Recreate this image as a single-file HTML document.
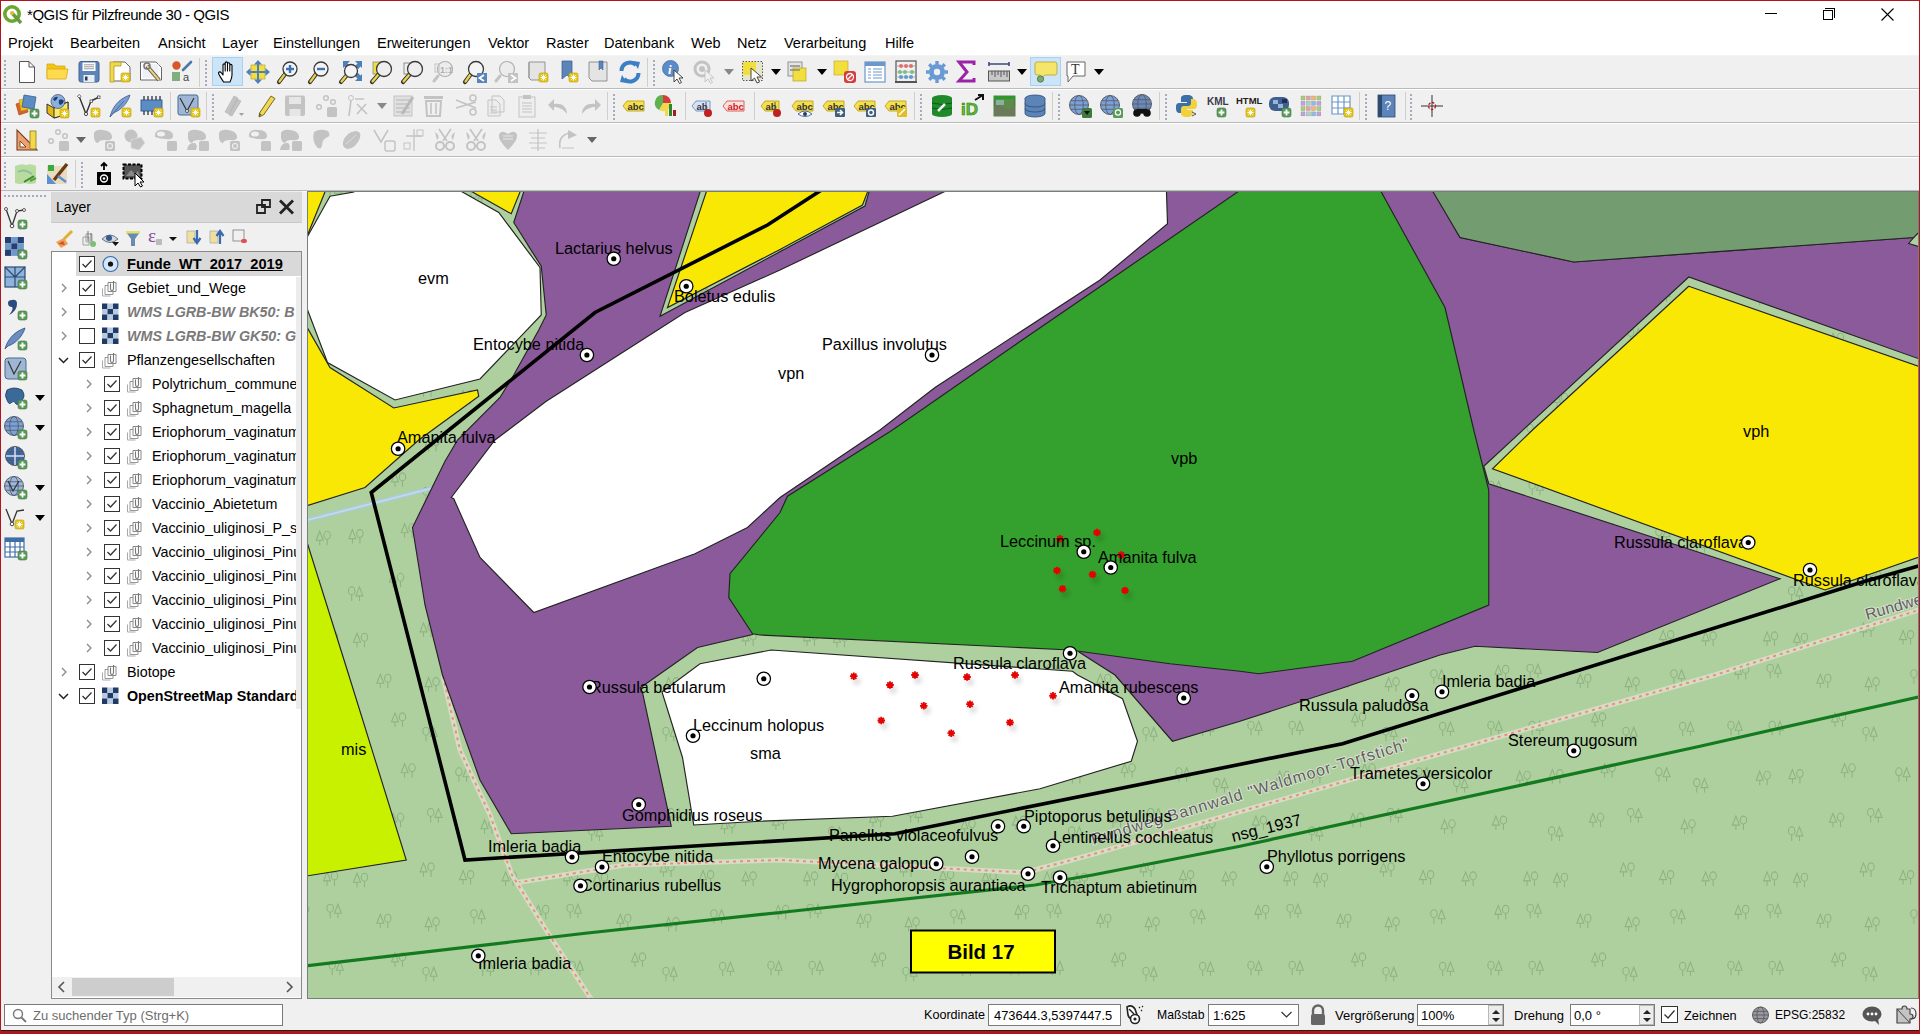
<!DOCTYPE html><html><head><meta charset="utf-8"><style>
*{margin:0;padding:0;box-sizing:border-box}
html,body{width:1920px;height:1034px;overflow:hidden;background:#f0f0f0;font-family:"Liberation Sans",sans-serif;position:relative}
.a{position:absolute}
.t{position:absolute;white-space:nowrap;color:#000}
</style></head><body>
<div class="a" style="left:0px;top:0px;width:1920px;height:56px;background:#ffffff"></div>
<svg class="a" style="left:2px;top:4px" width="22" height="22"><circle cx="10" cy="10" r="7.2" fill="none" stroke="#6aa832" stroke-width="3.6"/><path d="M10 9L19 19" stroke="#6a9a40" stroke-width="3.4"/><circle cx="10" cy="9" r="2" fill="#e8b830"/></svg>
<div class="t" style="left:27px;top:6px;font-size:15px;line-height:17px;letter-spacing:-0.45px">*QGIS für Pilzfreunde 30 - QGIS</div>
<div class="t" style="left:8px;top:35px;font-size:14.5px;line-height:17px;">Projekt</div>
<div class="t" style="left:70px;top:35px;font-size:14.5px;line-height:17px;">Bearbeiten</div>
<div class="t" style="left:158px;top:35px;font-size:14.5px;line-height:17px;">Ansicht</div>
<div class="t" style="left:222px;top:35px;font-size:14.5px;line-height:17px;">Layer</div>
<div class="t" style="left:273px;top:35px;font-size:14.5px;line-height:17px;">Einstellungen</div>
<div class="t" style="left:377px;top:35px;font-size:14.5px;line-height:17px;">Erweiterungen</div>
<div class="t" style="left:488px;top:35px;font-size:14.5px;line-height:17px;">Vektor</div>
<div class="t" style="left:546px;top:35px;font-size:14.5px;line-height:17px;">Raster</div>
<div class="t" style="left:604px;top:35px;font-size:14.5px;line-height:17px;">Datenbank</div>
<div class="t" style="left:691px;top:35px;font-size:14.5px;line-height:17px;">Web</div>
<div class="t" style="left:737px;top:35px;font-size:14.5px;line-height:17px;">Netz</div>
<div class="t" style="left:784px;top:35px;font-size:14.5px;line-height:17px;">Verarbeitung</div>
<div class="t" style="left:885px;top:35px;font-size:14.5px;line-height:17px;">Hilfe</div>
<div class="a" style="left:1765px;top:13px;width:12px;height:1px;background:#000"></div>
<div class="a" style="left:1823px;top:10px;width:10px;height:10px;border:1px solid #000"></div>
<div class="a" style="left:1825px;top:8px;width:10px;height:10px;border-top:1px solid #000;border-right:1px solid #000"></div>
<svg class="a" style="left:1881px;top:8px" width="13" height="13"><path d="M0.5 0.5 L12.5 12.5 M12.5 0.5 L0.5 12.5" stroke="#000" stroke-width="1.1"/></svg>
<div class="a" style="left:0px;top:56px;width:1920px;height:135px;background:#f0f0f0"></div>
<div class="a" style="left:0px;top:88px;width:1920px;height:1px;background:#bababa"></div>
<div class="a" style="left:0px;top:89px;width:1920px;height:1px;background:#ffffff"></div>
<div class="a" style="left:0px;top:122px;width:1920px;height:1px;background:#bababa"></div>
<div class="a" style="left:0px;top:123px;width:1920px;height:1px;background:#ffffff"></div>
<div class="a" style="left:0px;top:156px;width:1920px;height:1px;background:#bababa"></div>
<div class="a" style="left:0px;top:157px;width:1920px;height:1px;background:#ffffff"></div>
<div class="a" style="left:0px;top:190px;width:1920px;height:1px;background:#bababa"></div>
<div class="a" style="left:0px;top:191px;width:1920px;height:1px;background:#ffffff"></div>
<div class="a" style="left:0px;top:55px;width:1920px;height:1px;background:#f4f4f4"></div>
<div class="a" style="left:212px;top:57px;width:31px;height:29px;background:#cce4f7;border:1px solid #a8d0f0"></div>
<div class="a" style="left:1030px;top:57px;width:31px;height:29px;background:#cce4f7;border:1px solid #a8d0f0"></div>
<div class="a" style="left:0px;top:191px;width:50px;height:807px;background:#f0f0f0"></div>
<div class="a" style="left:50px;top:191px;width:253px;height:807px;background:#f0f0f0"></div>
<div class="a" style="left:51px;top:192px;width:251px;height:31px;background:#d9d9d9;border-bottom:1px solid #c8c8c8"></div>
<div class="t" style="left:56px;top:199px;font-size:14px;line-height:16px;">Layer</div>
<div class="a" style="left:51px;top:251px;width:251px;height:748px;background:#fff;border:1px solid #8a8a8a"></div>
<div class="a" style="left:76px;top:252px;width:225px;height:24px;background:#d9d9d9"></div>
<div class="a" style="left:296px;top:277px;width:5px;height:432px;background:#ececec"></div>
<div class="a" style="left:51px;top:252px;width:245px;height:720px;overflow:hidden"><div class="t" style="left:76px;top:4px;line-height:17px;font-weight:bold;text-decoration:underline;font-size:14.6px">Funde_WT_2017_2019</div><div class="t" style="left:76px;top:28px;line-height:17px;font-size:14.3px">Gebiet_und_Wege</div><div class="t" style="left:76px;top:52px;line-height:17px;font-weight:bold;font-style:italic;color:#7a7a7a;font-size:14.3px">WMS LGRB-BW BK50: B</div><div class="t" style="left:76px;top:76px;line-height:17px;font-weight:bold;font-style:italic;color:#7a7a7a;font-size:14.3px">WMS LGRB-BW GK50: G</div><div class="t" style="left:76px;top:100px;line-height:17px;font-size:14.4px">Pflanzengesellschaften</div><div class="t" style="left:101px;top:124px;line-height:17px;font-size:14.3px">Polytrichum_commune</div><div class="t" style="left:101px;top:148px;line-height:17px;font-size:14.3px">Sphagnetum_magella</div><div class="t" style="left:101px;top:172px;line-height:17px;font-size:14.3px">Eriophorum_vaginatum</div><div class="t" style="left:101px;top:196px;line-height:17px;font-size:14.3px">Eriophorum_vaginatum</div><div class="t" style="left:101px;top:220px;line-height:17px;font-size:14.3px">Eriophorum_vaginatum</div><div class="t" style="left:101px;top:244px;line-height:17px;font-size:14.3px">Vaccinio_Abietetum</div><div class="t" style="left:101px;top:268px;line-height:17px;font-size:14.3px">Vaccinio_uliginosi_P_sy</div><div class="t" style="left:101px;top:292px;line-height:17px;font-size:14.3px">Vaccinio_uliginosi_Pinus</div><div class="t" style="left:101px;top:316px;line-height:17px;font-size:14.3px">Vaccinio_uliginosi_Pinus</div><div class="t" style="left:101px;top:340px;line-height:17px;font-size:14.3px">Vaccinio_uliginosi_Pinus</div><div class="t" style="left:101px;top:364px;line-height:17px;font-size:14.3px">Vaccinio_uliginosi_Pinus</div><div class="t" style="left:101px;top:388px;line-height:17px;font-size:14.3px">Vaccinio_uliginosi_Pinus</div><div class="t" style="left:76px;top:412px;line-height:17px;font-size:14.3px">Biotope</div><div class="t" style="left:76px;top:436px;line-height:17px;font-weight:bold;font-size:14.3px">OpenStreetMap Standard</div></div>
<svg class="a" style="left:0;top:0" width="320" height="1034"><g transform="translate(79,256)"><rect x="0.5" y="0.5" width="15" height="15" fill="#fff" stroke="#333" stroke-width="1"/><path d="M3.5 8L6.5 11L12.5 4.5" fill="none" stroke="#333" stroke-width="1.3"/></g><g transform="translate(102,255.5)"><circle cx="8.5" cy="8.5" r="7.5" fill="#d4e6f8" stroke="#3a6ab0" stroke-width="1.2"/><circle cx="8.5" cy="8.5" r="2.6" fill="#111"/></g><g transform="translate(79,280)"><rect x="0.5" y="0.5" width="15" height="15" fill="#fff" stroke="#333" stroke-width="1"/><path d="M3.5 8L6.5 11L12.5 4.5" fill="none" stroke="#333" stroke-width="1.3"/></g><g transform="translate(102,279.5)"><path d="M0.5 16.5H8.5M0.5 16.5V9" stroke="#aaa" stroke-width="1" fill="none"/><path d="M3 6H11V15H3Z" fill="#fff" stroke="#999" stroke-width="1"/><path d="M6 3H14V12H6Z" fill="#fff" stroke="#888" stroke-width="1"/><path d="M8.5 4V9Q8.5 11 10 11Q11.5 11 11.5 9V1.5" fill="none" stroke="#777" stroke-width="1.1"/></g><g transform="translate(61,283)"><path d="M1 1L5 5L1 9" fill="none" stroke="#888" stroke-width="1.3"/></g><g transform="translate(79,304)"><rect x="0.5" y="0.5" width="15" height="15" fill="#fff" stroke="#333" stroke-width="1"/></g><g transform="translate(102,303.5)"><rect x="0.0" y="0.0" width="5.5" height="5.5" fill="#1f3a63"/><rect x="5.5" y="0.0" width="5.5" height="5.5" fill="#b9cbe3"/><rect x="11.0" y="0.0" width="5.5" height="5.5" fill="#1f3a63"/><rect x="0.0" y="5.5" width="5.5" height="5.5" fill="#b9cbe3"/><rect x="5.5" y="5.5" width="5.5" height="5.5" fill="#1f3a63"/><rect x="11.0" y="5.5" width="5.5" height="5.5" fill="#b9cbe3"/><rect x="0.0" y="11.0" width="5.5" height="5.5" fill="#1f3a63"/><rect x="5.5" y="11.0" width="5.5" height="5.5" fill="#b9cbe3"/><rect x="11.0" y="11.0" width="5.5" height="5.5" fill="#1f3a63"/></g><g transform="translate(61,307)"><path d="M1 1L5 5L1 9" fill="none" stroke="#888" stroke-width="1.3"/></g><g transform="translate(79,328)"><rect x="0.5" y="0.5" width="15" height="15" fill="#fff" stroke="#333" stroke-width="1"/></g><g transform="translate(102,327.5)"><rect x="0.0" y="0.0" width="5.5" height="5.5" fill="#1f3a63"/><rect x="5.5" y="0.0" width="5.5" height="5.5" fill="#b9cbe3"/><rect x="11.0" y="0.0" width="5.5" height="5.5" fill="#1f3a63"/><rect x="0.0" y="5.5" width="5.5" height="5.5" fill="#b9cbe3"/><rect x="5.5" y="5.5" width="5.5" height="5.5" fill="#1f3a63"/><rect x="11.0" y="5.5" width="5.5" height="5.5" fill="#b9cbe3"/><rect x="0.0" y="11.0" width="5.5" height="5.5" fill="#1f3a63"/><rect x="5.5" y="11.0" width="5.5" height="5.5" fill="#b9cbe3"/><rect x="11.0" y="11.0" width="5.5" height="5.5" fill="#1f3a63"/></g><g transform="translate(61,331)"><path d="M1 1L5 5L1 9" fill="none" stroke="#888" stroke-width="1.3"/></g><g transform="translate(79,352)"><rect x="0.5" y="0.5" width="15" height="15" fill="#fff" stroke="#333" stroke-width="1"/><path d="M3.5 8L6.5 11L12.5 4.5" fill="none" stroke="#333" stroke-width="1.3"/></g><g transform="translate(102,351.5)"><path d="M0.5 16.5H8.5M0.5 16.5V9" stroke="#aaa" stroke-width="1" fill="none"/><path d="M3 6H11V15H3Z" fill="#fff" stroke="#999" stroke-width="1"/><path d="M6 3H14V12H6Z" fill="#fff" stroke="#888" stroke-width="1"/><path d="M8.5 4V9Q8.5 11 10 11Q11.5 11 11.5 9V1.5" fill="none" stroke="#777" stroke-width="1.1"/></g><g transform="translate(58,357)"><path d="M1 1L5.5 5.5L10 1" fill="none" stroke="#222" stroke-width="1.5"/></g><g transform="translate(104,376)"><rect x="0.5" y="0.5" width="15" height="15" fill="#fff" stroke="#333" stroke-width="1"/><path d="M3.5 8L6.5 11L12.5 4.5" fill="none" stroke="#333" stroke-width="1.3"/></g><g transform="translate(127,375.5)"><path d="M0.5 16.5H8.5M0.5 16.5V9" stroke="#aaa" stroke-width="1" fill="none"/><path d="M3 6H11V15H3Z" fill="#fff" stroke="#999" stroke-width="1"/><path d="M6 3H14V12H6Z" fill="#fff" stroke="#888" stroke-width="1"/><path d="M8.5 4V9Q8.5 11 10 11Q11.5 11 11.5 9V1.5" fill="none" stroke="#777" stroke-width="1.1"/></g><g transform="translate(86,379)"><path d="M1 1L5 5L1 9" fill="none" stroke="#888" stroke-width="1.3"/></g><g transform="translate(104,400)"><rect x="0.5" y="0.5" width="15" height="15" fill="#fff" stroke="#333" stroke-width="1"/><path d="M3.5 8L6.5 11L12.5 4.5" fill="none" stroke="#333" stroke-width="1.3"/></g><g transform="translate(127,399.5)"><path d="M0.5 16.5H8.5M0.5 16.5V9" stroke="#aaa" stroke-width="1" fill="none"/><path d="M3 6H11V15H3Z" fill="#fff" stroke="#999" stroke-width="1"/><path d="M6 3H14V12H6Z" fill="#fff" stroke="#888" stroke-width="1"/><path d="M8.5 4V9Q8.5 11 10 11Q11.5 11 11.5 9V1.5" fill="none" stroke="#777" stroke-width="1.1"/></g><g transform="translate(86,403)"><path d="M1 1L5 5L1 9" fill="none" stroke="#888" stroke-width="1.3"/></g><g transform="translate(104,424)"><rect x="0.5" y="0.5" width="15" height="15" fill="#fff" stroke="#333" stroke-width="1"/><path d="M3.5 8L6.5 11L12.5 4.5" fill="none" stroke="#333" stroke-width="1.3"/></g><g transform="translate(127,423.5)"><path d="M0.5 16.5H8.5M0.5 16.5V9" stroke="#aaa" stroke-width="1" fill="none"/><path d="M3 6H11V15H3Z" fill="#fff" stroke="#999" stroke-width="1"/><path d="M6 3H14V12H6Z" fill="#fff" stroke="#888" stroke-width="1"/><path d="M8.5 4V9Q8.5 11 10 11Q11.5 11 11.5 9V1.5" fill="none" stroke="#777" stroke-width="1.1"/></g><g transform="translate(86,427)"><path d="M1 1L5 5L1 9" fill="none" stroke="#888" stroke-width="1.3"/></g><g transform="translate(104,448)"><rect x="0.5" y="0.5" width="15" height="15" fill="#fff" stroke="#333" stroke-width="1"/><path d="M3.5 8L6.5 11L12.5 4.5" fill="none" stroke="#333" stroke-width="1.3"/></g><g transform="translate(127,447.5)"><path d="M0.5 16.5H8.5M0.5 16.5V9" stroke="#aaa" stroke-width="1" fill="none"/><path d="M3 6H11V15H3Z" fill="#fff" stroke="#999" stroke-width="1"/><path d="M6 3H14V12H6Z" fill="#fff" stroke="#888" stroke-width="1"/><path d="M8.5 4V9Q8.5 11 10 11Q11.5 11 11.5 9V1.5" fill="none" stroke="#777" stroke-width="1.1"/></g><g transform="translate(86,451)"><path d="M1 1L5 5L1 9" fill="none" stroke="#888" stroke-width="1.3"/></g><g transform="translate(104,472)"><rect x="0.5" y="0.5" width="15" height="15" fill="#fff" stroke="#333" stroke-width="1"/><path d="M3.5 8L6.5 11L12.5 4.5" fill="none" stroke="#333" stroke-width="1.3"/></g><g transform="translate(127,471.5)"><path d="M0.5 16.5H8.5M0.5 16.5V9" stroke="#aaa" stroke-width="1" fill="none"/><path d="M3 6H11V15H3Z" fill="#fff" stroke="#999" stroke-width="1"/><path d="M6 3H14V12H6Z" fill="#fff" stroke="#888" stroke-width="1"/><path d="M8.5 4V9Q8.5 11 10 11Q11.5 11 11.5 9V1.5" fill="none" stroke="#777" stroke-width="1.1"/></g><g transform="translate(86,475)"><path d="M1 1L5 5L1 9" fill="none" stroke="#888" stroke-width="1.3"/></g><g transform="translate(104,496)"><rect x="0.5" y="0.5" width="15" height="15" fill="#fff" stroke="#333" stroke-width="1"/><path d="M3.5 8L6.5 11L12.5 4.5" fill="none" stroke="#333" stroke-width="1.3"/></g><g transform="translate(127,495.5)"><path d="M0.5 16.5H8.5M0.5 16.5V9" stroke="#aaa" stroke-width="1" fill="none"/><path d="M3 6H11V15H3Z" fill="#fff" stroke="#999" stroke-width="1"/><path d="M6 3H14V12H6Z" fill="#fff" stroke="#888" stroke-width="1"/><path d="M8.5 4V9Q8.5 11 10 11Q11.5 11 11.5 9V1.5" fill="none" stroke="#777" stroke-width="1.1"/></g><g transform="translate(86,499)"><path d="M1 1L5 5L1 9" fill="none" stroke="#888" stroke-width="1.3"/></g><g transform="translate(104,520)"><rect x="0.5" y="0.5" width="15" height="15" fill="#fff" stroke="#333" stroke-width="1"/><path d="M3.5 8L6.5 11L12.5 4.5" fill="none" stroke="#333" stroke-width="1.3"/></g><g transform="translate(127,519.5)"><path d="M0.5 16.5H8.5M0.5 16.5V9" stroke="#aaa" stroke-width="1" fill="none"/><path d="M3 6H11V15H3Z" fill="#fff" stroke="#999" stroke-width="1"/><path d="M6 3H14V12H6Z" fill="#fff" stroke="#888" stroke-width="1"/><path d="M8.5 4V9Q8.5 11 10 11Q11.5 11 11.5 9V1.5" fill="none" stroke="#777" stroke-width="1.1"/></g><g transform="translate(86,523)"><path d="M1 1L5 5L1 9" fill="none" stroke="#888" stroke-width="1.3"/></g><g transform="translate(104,544)"><rect x="0.5" y="0.5" width="15" height="15" fill="#fff" stroke="#333" stroke-width="1"/><path d="M3.5 8L6.5 11L12.5 4.5" fill="none" stroke="#333" stroke-width="1.3"/></g><g transform="translate(127,543.5)"><path d="M0.5 16.5H8.5M0.5 16.5V9" stroke="#aaa" stroke-width="1" fill="none"/><path d="M3 6H11V15H3Z" fill="#fff" stroke="#999" stroke-width="1"/><path d="M6 3H14V12H6Z" fill="#fff" stroke="#888" stroke-width="1"/><path d="M8.5 4V9Q8.5 11 10 11Q11.5 11 11.5 9V1.5" fill="none" stroke="#777" stroke-width="1.1"/></g><g transform="translate(86,547)"><path d="M1 1L5 5L1 9" fill="none" stroke="#888" stroke-width="1.3"/></g><g transform="translate(104,568)"><rect x="0.5" y="0.5" width="15" height="15" fill="#fff" stroke="#333" stroke-width="1"/><path d="M3.5 8L6.5 11L12.5 4.5" fill="none" stroke="#333" stroke-width="1.3"/></g><g transform="translate(127,567.5)"><path d="M0.5 16.5H8.5M0.5 16.5V9" stroke="#aaa" stroke-width="1" fill="none"/><path d="M3 6H11V15H3Z" fill="#fff" stroke="#999" stroke-width="1"/><path d="M6 3H14V12H6Z" fill="#fff" stroke="#888" stroke-width="1"/><path d="M8.5 4V9Q8.5 11 10 11Q11.5 11 11.5 9V1.5" fill="none" stroke="#777" stroke-width="1.1"/></g><g transform="translate(86,571)"><path d="M1 1L5 5L1 9" fill="none" stroke="#888" stroke-width="1.3"/></g><g transform="translate(104,592)"><rect x="0.5" y="0.5" width="15" height="15" fill="#fff" stroke="#333" stroke-width="1"/><path d="M3.5 8L6.5 11L12.5 4.5" fill="none" stroke="#333" stroke-width="1.3"/></g><g transform="translate(127,591.5)"><path d="M0.5 16.5H8.5M0.5 16.5V9" stroke="#aaa" stroke-width="1" fill="none"/><path d="M3 6H11V15H3Z" fill="#fff" stroke="#999" stroke-width="1"/><path d="M6 3H14V12H6Z" fill="#fff" stroke="#888" stroke-width="1"/><path d="M8.5 4V9Q8.5 11 10 11Q11.5 11 11.5 9V1.5" fill="none" stroke="#777" stroke-width="1.1"/></g><g transform="translate(86,595)"><path d="M1 1L5 5L1 9" fill="none" stroke="#888" stroke-width="1.3"/></g><g transform="translate(104,616)"><rect x="0.5" y="0.5" width="15" height="15" fill="#fff" stroke="#333" stroke-width="1"/><path d="M3.5 8L6.5 11L12.5 4.5" fill="none" stroke="#333" stroke-width="1.3"/></g><g transform="translate(127,615.5)"><path d="M0.5 16.5H8.5M0.5 16.5V9" stroke="#aaa" stroke-width="1" fill="none"/><path d="M3 6H11V15H3Z" fill="#fff" stroke="#999" stroke-width="1"/><path d="M6 3H14V12H6Z" fill="#fff" stroke="#888" stroke-width="1"/><path d="M8.5 4V9Q8.5 11 10 11Q11.5 11 11.5 9V1.5" fill="none" stroke="#777" stroke-width="1.1"/></g><g transform="translate(86,619)"><path d="M1 1L5 5L1 9" fill="none" stroke="#888" stroke-width="1.3"/></g><g transform="translate(104,640)"><rect x="0.5" y="0.5" width="15" height="15" fill="#fff" stroke="#333" stroke-width="1"/><path d="M3.5 8L6.5 11L12.5 4.5" fill="none" stroke="#333" stroke-width="1.3"/></g><g transform="translate(127,639.5)"><path d="M0.5 16.5H8.5M0.5 16.5V9" stroke="#aaa" stroke-width="1" fill="none"/><path d="M3 6H11V15H3Z" fill="#fff" stroke="#999" stroke-width="1"/><path d="M6 3H14V12H6Z" fill="#fff" stroke="#888" stroke-width="1"/><path d="M8.5 4V9Q8.5 11 10 11Q11.5 11 11.5 9V1.5" fill="none" stroke="#777" stroke-width="1.1"/></g><g transform="translate(86,643)"><path d="M1 1L5 5L1 9" fill="none" stroke="#888" stroke-width="1.3"/></g><g transform="translate(79,664)"><rect x="0.5" y="0.5" width="15" height="15" fill="#fff" stroke="#333" stroke-width="1"/><path d="M3.5 8L6.5 11L12.5 4.5" fill="none" stroke="#333" stroke-width="1.3"/></g><g transform="translate(102,663.5)"><path d="M0.5 16.5H8.5M0.5 16.5V9" stroke="#aaa" stroke-width="1" fill="none"/><path d="M3 6H11V15H3Z" fill="#fff" stroke="#999" stroke-width="1"/><path d="M6 3H14V12H6Z" fill="#fff" stroke="#888" stroke-width="1"/><path d="M8.5 4V9Q8.5 11 10 11Q11.5 11 11.5 9V1.5" fill="none" stroke="#777" stroke-width="1.1"/></g><g transform="translate(61,667)"><path d="M1 1L5 5L1 9" fill="none" stroke="#888" stroke-width="1.3"/></g><g transform="translate(79,688)"><rect x="0.5" y="0.5" width="15" height="15" fill="#fff" stroke="#333" stroke-width="1"/><path d="M3.5 8L6.5 11L12.5 4.5" fill="none" stroke="#333" stroke-width="1.3"/></g><g transform="translate(102,687.5)"><rect x="0.0" y="0.0" width="5.5" height="5.5" fill="#1f3a63"/><rect x="5.5" y="0.0" width="5.5" height="5.5" fill="#b9cbe3"/><rect x="11.0" y="0.0" width="5.5" height="5.5" fill="#1f3a63"/><rect x="0.0" y="5.5" width="5.5" height="5.5" fill="#b9cbe3"/><rect x="5.5" y="5.5" width="5.5" height="5.5" fill="#1f3a63"/><rect x="11.0" y="5.5" width="5.5" height="5.5" fill="#b9cbe3"/><rect x="0.0" y="11.0" width="5.5" height="5.5" fill="#1f3a63"/><rect x="5.5" y="11.0" width="5.5" height="5.5" fill="#b9cbe3"/><rect x="11.0" y="11.0" width="5.5" height="5.5" fill="#1f3a63"/></g><g transform="translate(58,693)"><path d="M1 1L5.5 5.5L10 1" fill="none" stroke="#222" stroke-width="1.5"/></g></svg>
<svg class="a" style="left:254px;top:198px" width="46" height="20"><path d="M8 2H16V9H8Z M3 7H11V15H3Z" fill="#d9d9d9" stroke="#222" stroke-width="1.8"/><path d="M26 2.5L39 15.5M39 2.5L26 15.5" stroke="#222" stroke-width="2.8"/></svg>
<div class="a" style="left:52px;top:977px;width:249px;height:20px;background:#f0f0f0"></div>
<div class="a" style="left:72px;top:978px;width:102px;height:18px;background:#cdcdcd"></div>
<svg class="a" style="left:55px;top:980px" width="250" height="14"><path d="M9 2L4 7L9 12" fill="none" stroke="#555" stroke-width="1.6"/><path d="M232 2L237 7L232 12" fill="none" stroke="#555" stroke-width="1.6"/></svg>
<div class="a" style="left:307px;top:191px;width:1612px;height:808px;background:#aed09e;border:1px solid #76807a"></div>
<svg style="position:absolute;left:308px;top:192px" width="1610" height="806" viewBox="308 192 1610 806">
<defs><pattern id="trees" patternUnits="userSpaceOnUse" width="240" height="240" x="0" y="0"><g transform="translate(238.9,1.2)" fill="none" stroke="#8db381" stroke-width="1.1"><ellipse cx="3.8" cy="5" rx="3.2" ry="4"/><line x1="3.8" y1="9" x2="3.8" y2="15"/><path d="M11.5 1 L15 10 L8 10 Z"/><line x1="11.5" y1="10" x2="11.5" y2="15"/></g><g transform="translate(-1.1,1.2)" fill="none" stroke="#8db381" stroke-width="1.1"><ellipse cx="3.8" cy="5" rx="3.2" ry="4"/><line x1="3.8" y1="9" x2="3.8" y2="15"/><path d="M11.5 1 L15 10 L8 10 Z"/><line x1="11.5" y1="10" x2="11.5" y2="15"/></g><g transform="translate(47.2,0.2)" fill="none" stroke="#8db381" stroke-width="1.1"><ellipse cx="3.8" cy="5" rx="3.2" ry="4"/><line x1="3.8" y1="9" x2="3.8" y2="15"/><path d="M11.5 1 L15 10 L8 10 Z"/><line x1="11.5" y1="10" x2="11.5" y2="15"/></g><g transform="translate(88.4,0.2)" fill="none" stroke="#8db381" stroke-width="1.1"><ellipse cx="3.8" cy="5" rx="3.2" ry="4"/><line x1="3.8" y1="9" x2="3.8" y2="15"/><path d="M11.5 1 L15 10 L8 10 Z"/><line x1="11.5" y1="10" x2="11.5" y2="15"/></g><g transform="translate(151.0,231.9)" fill="none" stroke="#8db381" stroke-width="1.1"><path d="M4 1 L7.5 10 L0.5 10 Z"/><line x1="4" y1="10" x2="4" y2="15"/><ellipse cx="11.5" cy="5" rx="3.2" ry="4"/><line x1="11.5" y1="9" x2="11.5" y2="15"/></g><g transform="translate(151.0,-8.1)" fill="none" stroke="#8db381" stroke-width="1.1"><path d="M4 1 L7.5 10 L0.5 10 Z"/><line x1="4" y1="10" x2="4" y2="15"/><ellipse cx="11.5" cy="5" rx="3.2" ry="4"/><line x1="11.5" y1="9" x2="11.5" y2="15"/></g><g transform="translate(182.2,6.2)" fill="none" stroke="#8db381" stroke-width="1.1"><ellipse cx="3.8" cy="5" rx="3.2" ry="4"/><line x1="3.8" y1="9" x2="3.8" y2="15"/><path d="M11.5 1 L15 10 L8 10 Z"/><line x1="11.5" y1="10" x2="11.5" y2="15"/></g><g transform="translate(13.0,57.6)" fill="none" stroke="#8db381" stroke-width="1.1"><ellipse cx="3.8" cy="5" rx="3.2" ry="4"/><line x1="3.8" y1="9" x2="3.8" y2="15"/><path d="M11.5 1 L15 10 L8 10 Z"/><line x1="11.5" y1="10" x2="11.5" y2="15"/></g><g transform="translate(75.7,50.3)" fill="none" stroke="#8db381" stroke-width="1.1"><path d="M4 1 L7.5 10 L0.5 10 Z"/><line x1="4" y1="10" x2="4" y2="15"/><ellipse cx="11.5" cy="5" rx="3.2" ry="4"/><line x1="11.5" y1="9" x2="11.5" y2="15"/></g><g transform="translate(108.4,48.6)" fill="none" stroke="#8db381" stroke-width="1.1"><path d="M4 1 L7.5 10 L0.5 10 Z"/><line x1="4" y1="10" x2="4" y2="15"/><ellipse cx="11.5" cy="5" rx="3.2" ry="4"/><line x1="11.5" y1="9" x2="11.5" y2="15"/></g><g transform="translate(160.6,42.8)" fill="none" stroke="#8db381" stroke-width="1.1"><path d="M4 1 L7.5 10 L0.5 10 Z"/><line x1="4" y1="10" x2="4" y2="15"/><ellipse cx="11.5" cy="5" rx="3.2" ry="4"/><line x1="11.5" y1="9" x2="11.5" y2="15"/></g><g transform="translate(215.1,46.8)" fill="none" stroke="#8db381" stroke-width="1.1"><ellipse cx="3.8" cy="5" rx="3.2" ry="4"/><line x1="3.8" y1="9" x2="3.8" y2="15"/><path d="M11.5 1 L15 10 L8 10 Z"/><line x1="11.5" y1="10" x2="11.5" y2="15"/></g><g transform="translate(0.5,98.8)" fill="none" stroke="#8db381" stroke-width="1.1"><path d="M4 1 L7.5 10 L0.5 10 Z"/><line x1="4" y1="10" x2="4" y2="15"/><ellipse cx="11.5" cy="5" rx="3.2" ry="4"/><line x1="11.5" y1="9" x2="11.5" y2="15"/></g><g transform="translate(51.9,95.1)" fill="none" stroke="#8db381" stroke-width="1.1"><path d="M4 1 L7.5 10 L0.5 10 Z"/><line x1="4" y1="10" x2="4" y2="15"/><ellipse cx="11.5" cy="5" rx="3.2" ry="4"/><line x1="11.5" y1="9" x2="11.5" y2="15"/></g><g transform="translate(107.9,105.9)" fill="none" stroke="#8db381" stroke-width="1.1"><ellipse cx="3.8" cy="5" rx="3.2" ry="4"/><line x1="3.8" y1="9" x2="3.8" y2="15"/><path d="M11.5 1 L15 10 L8 10 Z"/><line x1="11.5" y1="10" x2="11.5" y2="15"/></g><g transform="translate(149.0,92.3)" fill="none" stroke="#8db381" stroke-width="1.1"><path d="M4 1 L7.5 10 L0.5 10 Z"/><line x1="4" y1="10" x2="4" y2="15"/><ellipse cx="11.5" cy="5" rx="3.2" ry="4"/><line x1="11.5" y1="9" x2="11.5" y2="15"/></g><g transform="translate(186.9,87.4)" fill="none" stroke="#8db381" stroke-width="1.1"><ellipse cx="3.8" cy="5" rx="3.2" ry="4"/><line x1="3.8" y1="9" x2="3.8" y2="15"/><path d="M11.5 1 L15 10 L8 10 Z"/><line x1="11.5" y1="10" x2="11.5" y2="15"/></g><g transform="translate(21.6,150.9)" fill="none" stroke="#8db381" stroke-width="1.1"><path d="M4 1 L7.5 10 L0.5 10 Z"/><line x1="4" y1="10" x2="4" y2="15"/><ellipse cx="11.5" cy="5" rx="3.2" ry="4"/><line x1="11.5" y1="9" x2="11.5" y2="15"/></g><g transform="translate(83.0,150.9)" fill="none" stroke="#8db381" stroke-width="1.1"><path d="M4 1 L7.5 10 L0.5 10 Z"/><line x1="4" y1="10" x2="4" y2="15"/><ellipse cx="11.5" cy="5" rx="3.2" ry="4"/><line x1="11.5" y1="9" x2="11.5" y2="15"/></g><g transform="translate(113.0,152.2)" fill="none" stroke="#8db381" stroke-width="1.1"><path d="M4 1 L7.5 10 L0.5 10 Z"/><line x1="4" y1="10" x2="4" y2="15"/><ellipse cx="11.5" cy="5" rx="3.2" ry="4"/><line x1="11.5" y1="9" x2="11.5" y2="15"/></g><g transform="translate(179.5,141.9)" fill="none" stroke="#8db381" stroke-width="1.1"><path d="M4 1 L7.5 10 L0.5 10 Z"/><line x1="4" y1="10" x2="4" y2="15"/><ellipse cx="11.5" cy="5" rx="3.2" ry="4"/><line x1="11.5" y1="9" x2="11.5" y2="15"/></g><g transform="translate(219.1,149.6)" fill="none" stroke="#8db381" stroke-width="1.1"><path d="M4 1 L7.5 10 L0.5 10 Z"/><line x1="4" y1="10" x2="4" y2="15"/><ellipse cx="11.5" cy="5" rx="3.2" ry="4"/><line x1="11.5" y1="9" x2="11.5" y2="15"/></g><g transform="translate(230.1,188.7)" fill="none" stroke="#8db381" stroke-width="1.1"><ellipse cx="3.8" cy="5" rx="3.2" ry="4"/><line x1="3.8" y1="9" x2="3.8" y2="15"/><path d="M11.5 1 L15 10 L8 10 Z"/><line x1="11.5" y1="10" x2="11.5" y2="15"/></g><g transform="translate(-9.9,188.7)" fill="none" stroke="#8db381" stroke-width="1.1"><ellipse cx="3.8" cy="5" rx="3.2" ry="4"/><line x1="3.8" y1="9" x2="3.8" y2="15"/><path d="M11.5 1 L15 10 L8 10 Z"/><line x1="11.5" y1="10" x2="11.5" y2="15"/></g><g transform="translate(54.2,184.4)" fill="none" stroke="#8db381" stroke-width="1.1"><path d="M4 1 L7.5 10 L0.5 10 Z"/><line x1="4" y1="10" x2="4" y2="15"/><ellipse cx="11.5" cy="5" rx="3.2" ry="4"/><line x1="11.5" y1="9" x2="11.5" y2="15"/></g><g transform="translate(86.4,183.2)" fill="none" stroke="#8db381" stroke-width="1.1"><ellipse cx="3.8" cy="5" rx="3.2" ry="4"/><line x1="3.8" y1="9" x2="3.8" y2="15"/><path d="M11.5 1 L15 10 L8 10 Z"/><line x1="11.5" y1="10" x2="11.5" y2="15"/></g><g transform="translate(136.3,193.2)" fill="none" stroke="#8db381" stroke-width="1.1"><path d="M4 1 L7.5 10 L0.5 10 Z"/><line x1="4" y1="10" x2="4" y2="15"/><ellipse cx="11.5" cy="5" rx="3.2" ry="4"/><line x1="11.5" y1="9" x2="11.5" y2="15"/></g><g transform="translate(184.6,196.6)" fill="none" stroke="#8db381" stroke-width="1.1"><path d="M4 1 L7.5 10 L0.5 10 Z"/><line x1="4" y1="10" x2="4" y2="15"/><ellipse cx="11.5" cy="5" rx="3.2" ry="4"/><line x1="11.5" y1="9" x2="11.5" y2="15"/></g></pattern><filter id="sh" x="-50%" y="-50%" width="200%" height="200%"><feGaussianBlur stdDeviation="2"/></filter></defs>
<rect x="308" y="192" width="1610" height="806" fill="#aed09e"/>
<rect x="308" y="192" width="1610" height="806" fill="url(#trees)"/>
<polyline points="300.00,522.00 430.00,488.75 460.00,481.00" fill="none" stroke="#aacbdf" stroke-width="4.2"/>
<polyline points="300.00,522.00 430.00,488.75 460.00,481.00" fill="none" stroke="#c4dcea" stroke-width="1.6"/>
<polyline points="517.50,882.50 625.00,865.00 780.00,860.00 1025.00,872.50 1090.00,855.00 1220.00,817.50 1440.00,753.75 1715.00,675.00 1925.00,608.00" fill="none" stroke="#d7dcc4" stroke-width="5" stroke-linejoin="round"/>
<polyline points="517.50,882.50 625.00,865.00 780.00,860.00 1025.00,872.50 1090.00,855.00 1220.00,817.50 1440.00,753.75 1715.00,675.00 1925.00,608.00" fill="none" stroke="#e98f80" stroke-width="2" stroke-dasharray="3,4"/>
<polyline points="443.00,676.00 460.00,750.00 490.00,815.00 512.00,875.00 548.00,933.00 595.00,1005.00" fill="none" stroke="#d7dcc4" stroke-width="5" stroke-linejoin="round"/>
<polyline points="443.00,676.00 460.00,750.00 490.00,815.00 512.00,875.00 548.00,933.00 595.00,1005.00" fill="none" stroke="#e98f80" stroke-width="2" stroke-dasharray="3,4"/>
<text transform="translate(474,748) rotate(63.4)" font-family="Liberation Sans" font-size="14" fill="#6e6e6e" stroke="#f2f2f2" stroke-width="2" paint-order="stroke">Torfstichweg&quot;</text>
<polygon points="300.00,520.00 307.50,543.75 348.75,675.00 406.25,860.00 300.00,877.00" fill="#c8f100" stroke="#232323" stroke-width="1.15" stroke-linejoin="miter" />
<polygon points="300.00,185.00 327.80,185.00 307.50,235.00 300.00,253.00" fill="#f9e804" stroke="#232323" stroke-width="1.15" stroke-linejoin="miter" />
<polygon points="300.00,315.00 330.00,367.50 393.75,408.00 477.50,390.00 478.75,396.25 418.75,440.00 365.00,487.50 300.00,508.00" fill="#f9e804" stroke="#232323" stroke-width="1.15" stroke-linejoin="miter" />
<polygon points="460.00,185.00 522.80,185.00 511.25,213.75" fill="#f9e804" stroke="#232323" stroke-width="1.15" stroke-linejoin="miter" />
<polygon points="526.00,185.00 702.30,185.00 660.00,316.25 865.00,206.00 871.00,185.00 1431.00,185.00 1460.00,237.50 1573.75,262.00 1913.75,237.50 1908.70,243.50 1925.00,248.50 1925.00,361.00 1688.75,277.00 1483.75,466.25 1488.75,483.75 1780.00,578.75 1597.50,652.50 1475.00,646.25 1440.00,655.00 1342.50,688.00 1240.00,721.25 1172.50,741.25 1115.00,675.00 1079.00,652.00 1070.00,640.00 760.00,600.00 752.50,634.50 697.50,647.50 640.00,688.00 642.50,692.50 671.25,826.25 511.25,833.75 480.00,780.00 442.50,675.00 425.00,605.00 412.50,527.50 445.00,461.25 457.50,440.00 500.00,397.50 513.75,375.00 538.75,330.00 546.25,315.00 541.25,266.25 513.75,222.50" fill="#8b5a9b" stroke="#232323" stroke-width="1.15" stroke-linejoin="miter" />
<polygon points="1429.00,185.00 1925.00,185.00 1925.00,226.00 1913.75,237.50 1573.75,262.00 1460.00,237.50" fill="#739d70" stroke="#232323" stroke-width="1.15" stroke-linejoin="miter" />
<polygon points="958.40,185.00 1166.25,185.00 1167.50,223.75 1100.00,280.00 935.00,387.50 880.00,430.00 780.00,497.50 747.50,527.50 695.00,553.75 533.75,612.50 480.00,557.50 453.75,498.75 451.25,497.50 495.00,440.00 546.25,401.25 685.00,312.50 780.00,270.00" fill="#ffffff" stroke="#232323" stroke-width="1.15" stroke-linejoin="miter" />
<polygon points="1247.70,185.00 1377.40,185.00 1445.00,307.50 1473.75,430.00 1488.75,490.00 1488.75,605.00 1352.50,661.25 1258.75,673.75 1240.00,671.25 1170.00,663.75 1070.00,650.00 760.00,635.00 752.50,633.75 728.75,597.50 730.00,573.75 780.00,512.50 787.50,496.25 892.50,430.00 1015.00,345.00 1102.50,285.00" fill="#34a02d" stroke="#232323" stroke-width="1.15" stroke-linejoin="miter" />
<polygon points="1688.75,286.25 1925.00,368.50 1925.00,555.00 1825.00,590.00 1492.50,468.75 1532.50,430.00" fill="#f9e804" stroke="#232323" stroke-width="1.15" stroke-linejoin="miter" />
<polygon points="708.60,185.00 870.20,185.00 862.50,205.00 780.00,249.50 667.50,307.50" fill="#f9e804" stroke="#232323" stroke-width="1.15" stroke-linejoin="miter" />
<polygon points="700.00,663.75 771.25,650.00 1072.50,671.25 1077.50,675.00 1122.50,698.75 1137.50,741.25 1131.25,761.25 1040.00,788.75 892.50,816.25 760.00,821.25 693.75,825.00 682.50,757.50 662.00,692.00" fill="#ffffff" stroke="#232323" stroke-width="1.15" stroke-linejoin="miter" />
<polygon points="330.00,196.25 353.75,192.00 353.75,185.00 450.00,185.00 498.75,212.50 540.00,267.50 541.25,315.00 480.00,379.00 395.00,400.00 327.50,362.50 300.00,290.00 300.00,250.00" fill="#ffffff" stroke="#232323" stroke-width="1.15" stroke-linejoin="miter" />
<polyline points="300.00,966.50 587.50,933.00 780.00,912.50 1035.00,885.00 1092.50,875.00 1240.00,846.25 1700.00,746.25 1925.00,695.50" fill="none" stroke="#137a1f" stroke-width="3.2" stroke-linejoin="round"/>
<polyline points="823.00,189.00 767.50,225.00 595.00,312.50 371.25,492.50 465.00,860.00 895.00,833.75 1342.50,743.75 1865.00,581.25 1925.00,564.00" fill="none" stroke="#000" stroke-width="3.6" stroke-linejoin="miter"/>
<circle cx="1063" cy="543.75" r="4" fill="#000" opacity="0.12" filter="url(#sh)"/>
<circle cx="1100" cy="537.5" r="4" fill="#000" opacity="0.12" filter="url(#sh)"/>
<circle cx="1124.25" cy="560" r="4" fill="#000" opacity="0.12" filter="url(#sh)"/>
<circle cx="1060" cy="575.5" r="4" fill="#000" opacity="0.12" filter="url(#sh)"/>
<circle cx="1095.5" cy="579.5" r="4" fill="#000" opacity="0.12" filter="url(#sh)"/>
<circle cx="1065.5" cy="593.75" r="4" fill="#000" opacity="0.12" filter="url(#sh)"/>
<circle cx="1128" cy="595.5" r="4" fill="#000" opacity="0.12" filter="url(#sh)"/>
<circle cx="856.75" cy="681.25" r="4" fill="#000" opacity="0.12" filter="url(#sh)"/>
<circle cx="893" cy="690" r="4" fill="#000" opacity="0.12" filter="url(#sh)"/>
<circle cx="918" cy="680" r="4" fill="#000" opacity="0.12" filter="url(#sh)"/>
<circle cx="970" cy="682" r="4" fill="#000" opacity="0.12" filter="url(#sh)"/>
<circle cx="1018" cy="680" r="4" fill="#000" opacity="0.12" filter="url(#sh)"/>
<circle cx="1056" cy="700.75" r="4" fill="#000" opacity="0.12" filter="url(#sh)"/>
<circle cx="926.75" cy="710.75" r="4" fill="#000" opacity="0.12" filter="url(#sh)"/>
<circle cx="973" cy="709.25" r="4" fill="#000" opacity="0.12" filter="url(#sh)"/>
<circle cx="884.25" cy="725.5" r="4" fill="#000" opacity="0.12" filter="url(#sh)"/>
<circle cx="1013" cy="727.5" r="4" fill="#000" opacity="0.12" filter="url(#sh)"/>
<circle cx="954.25" cy="738.25" r="4" fill="#000" opacity="0.12" filter="url(#sh)"/>
<path d="M1060.0 538.8 L1063.8 538.8 M1060.0 538.8 L1062.7 541.4 M1060.0 538.8 L1060.0 542.5 M1060.0 538.8 L1057.3 541.4 M1060.0 538.8 L1056.2 538.8 M1060.0 538.8 L1057.3 536.1 M1060.0 538.8 L1060.0 535.0 M1060.0 538.8 L1062.7 536.1 " stroke="#e60000" stroke-width="1.8"/><circle cx="1060" cy="538.75" r="2" fill="#e60000"/>
<path d="M1097.0 532.5 L1100.8 532.5 M1097.0 532.5 L1099.7 535.2 M1097.0 532.5 L1097.0 536.3 M1097.0 532.5 L1094.3 535.2 M1097.0 532.5 L1093.2 532.5 M1097.0 532.5 L1094.3 529.8 M1097.0 532.5 L1097.0 528.7 M1097.0 532.5 L1099.7 529.8 " stroke="#e60000" stroke-width="1.8"/><circle cx="1097" cy="532.5" r="2" fill="#e60000"/>
<path d="M1121.2 555.0 L1125.0 555.0 M1121.2 555.0 L1123.9 557.7 M1121.2 555.0 L1121.2 558.8 M1121.2 555.0 L1118.6 557.7 M1121.2 555.0 L1117.5 555.0 M1121.2 555.0 L1118.6 552.3 M1121.2 555.0 L1121.2 551.2 M1121.2 555.0 L1123.9 552.3 " stroke="#e60000" stroke-width="1.8"/><circle cx="1121.25" cy="555" r="2" fill="#e60000"/>
<path d="M1057.0 570.5 L1060.8 570.5 M1057.0 570.5 L1059.7 573.2 M1057.0 570.5 L1057.0 574.3 M1057.0 570.5 L1054.3 573.2 M1057.0 570.5 L1053.2 570.5 M1057.0 570.5 L1054.3 567.8 M1057.0 570.5 L1057.0 566.7 M1057.0 570.5 L1059.7 567.8 " stroke="#e60000" stroke-width="1.8"/><circle cx="1057" cy="570.5" r="2" fill="#e60000"/>
<path d="M1092.5 574.5 L1096.3 574.5 M1092.5 574.5 L1095.2 577.2 M1092.5 574.5 L1092.5 578.3 M1092.5 574.5 L1089.8 577.2 M1092.5 574.5 L1088.7 574.5 M1092.5 574.5 L1089.8 571.8 M1092.5 574.5 L1092.5 570.7 M1092.5 574.5 L1095.2 571.8 " stroke="#e60000" stroke-width="1.8"/><circle cx="1092.5" cy="574.5" r="2" fill="#e60000"/>
<path d="M1062.5 588.8 L1066.3 588.8 M1062.5 588.8 L1065.2 591.4 M1062.5 588.8 L1062.5 592.5 M1062.5 588.8 L1059.8 591.4 M1062.5 588.8 L1058.7 588.8 M1062.5 588.8 L1059.8 586.1 M1062.5 588.8 L1062.5 585.0 M1062.5 588.8 L1065.2 586.1 " stroke="#e60000" stroke-width="1.8"/><circle cx="1062.5" cy="588.75" r="2" fill="#e60000"/>
<path d="M1125.0 590.5 L1128.8 590.5 M1125.0 590.5 L1127.7 593.2 M1125.0 590.5 L1125.0 594.3 M1125.0 590.5 L1122.3 593.2 M1125.0 590.5 L1121.2 590.5 M1125.0 590.5 L1122.3 587.8 M1125.0 590.5 L1125.0 586.7 M1125.0 590.5 L1127.7 587.8 " stroke="#e60000" stroke-width="1.8"/><circle cx="1125" cy="590.5" r="2" fill="#e60000"/>
<path d="M853.8 676.2 L857.5 676.2 M853.8 676.2 L856.4 678.9 M853.8 676.2 L853.8 680.0 M853.8 676.2 L851.1 678.9 M853.8 676.2 L850.0 676.2 M853.8 676.2 L851.1 673.6 M853.8 676.2 L853.8 672.5 M853.8 676.2 L856.4 673.6 " stroke="#e60000" stroke-width="1.8"/><circle cx="853.75" cy="676.25" r="2" fill="#e60000"/>
<path d="M890.0 685.0 L893.8 685.0 M890.0 685.0 L892.7 687.7 M890.0 685.0 L890.0 688.8 M890.0 685.0 L887.3 687.7 M890.0 685.0 L886.2 685.0 M890.0 685.0 L887.3 682.3 M890.0 685.0 L890.0 681.2 M890.0 685.0 L892.7 682.3 " stroke="#e60000" stroke-width="1.8"/><circle cx="890" cy="685" r="2" fill="#e60000"/>
<path d="M915.0 675.0 L918.8 675.0 M915.0 675.0 L917.7 677.7 M915.0 675.0 L915.0 678.8 M915.0 675.0 L912.3 677.7 M915.0 675.0 L911.2 675.0 M915.0 675.0 L912.3 672.3 M915.0 675.0 L915.0 671.2 M915.0 675.0 L917.7 672.3 " stroke="#e60000" stroke-width="1.8"/><circle cx="915" cy="675" r="2" fill="#e60000"/>
<path d="M967.0 677.0 L970.8 677.0 M967.0 677.0 L969.7 679.7 M967.0 677.0 L967.0 680.8 M967.0 677.0 L964.3 679.7 M967.0 677.0 L963.2 677.0 M967.0 677.0 L964.3 674.3 M967.0 677.0 L967.0 673.2 M967.0 677.0 L969.7 674.3 " stroke="#e60000" stroke-width="1.8"/><circle cx="967" cy="677" r="2" fill="#e60000"/>
<path d="M1015.0 675.0 L1018.8 675.0 M1015.0 675.0 L1017.7 677.7 M1015.0 675.0 L1015.0 678.8 M1015.0 675.0 L1012.3 677.7 M1015.0 675.0 L1011.2 675.0 M1015.0 675.0 L1012.3 672.3 M1015.0 675.0 L1015.0 671.2 M1015.0 675.0 L1017.7 672.3 " stroke="#e60000" stroke-width="1.8"/><circle cx="1015" cy="675" r="2" fill="#e60000"/>
<path d="M1053.0 695.8 L1056.8 695.8 M1053.0 695.8 L1055.7 698.4 M1053.0 695.8 L1053.0 699.5 M1053.0 695.8 L1050.3 698.4 M1053.0 695.8 L1049.2 695.8 M1053.0 695.8 L1050.3 693.1 M1053.0 695.8 L1053.0 692.0 M1053.0 695.8 L1055.7 693.1 " stroke="#e60000" stroke-width="1.8"/><circle cx="1053" cy="695.75" r="2" fill="#e60000"/>
<path d="M923.8 705.8 L927.5 705.8 M923.8 705.8 L926.4 708.4 M923.8 705.8 L923.8 709.5 M923.8 705.8 L921.1 708.4 M923.8 705.8 L920.0 705.8 M923.8 705.8 L921.1 703.1 M923.8 705.8 L923.8 702.0 M923.8 705.8 L926.4 703.1 " stroke="#e60000" stroke-width="1.8"/><circle cx="923.75" cy="705.75" r="2" fill="#e60000"/>
<path d="M970.0 704.2 L973.8 704.2 M970.0 704.2 L972.7 706.9 M970.0 704.2 L970.0 708.0 M970.0 704.2 L967.3 706.9 M970.0 704.2 L966.2 704.2 M970.0 704.2 L967.3 701.6 M970.0 704.2 L970.0 700.5 M970.0 704.2 L972.7 701.6 " stroke="#e60000" stroke-width="1.8"/><circle cx="970" cy="704.25" r="2" fill="#e60000"/>
<path d="M881.2 720.5 L885.0 720.5 M881.2 720.5 L883.9 723.2 M881.2 720.5 L881.2 724.3 M881.2 720.5 L878.6 723.2 M881.2 720.5 L877.5 720.5 M881.2 720.5 L878.6 717.8 M881.2 720.5 L881.2 716.7 M881.2 720.5 L883.9 717.8 " stroke="#e60000" stroke-width="1.8"/><circle cx="881.25" cy="720.5" r="2" fill="#e60000"/>
<path d="M1010.0 722.5 L1013.8 722.5 M1010.0 722.5 L1012.7 725.2 M1010.0 722.5 L1010.0 726.3 M1010.0 722.5 L1007.3 725.2 M1010.0 722.5 L1006.2 722.5 M1010.0 722.5 L1007.3 719.8 M1010.0 722.5 L1010.0 718.7 M1010.0 722.5 L1012.7 719.8 " stroke="#e60000" stroke-width="1.8"/><circle cx="1010" cy="722.5" r="2" fill="#e60000"/>
<path d="M951.2 733.2 L955.0 733.2 M951.2 733.2 L953.9 735.9 M951.2 733.2 L951.2 737.0 M951.2 733.2 L948.6 735.9 M951.2 733.2 L947.5 733.2 M951.2 733.2 L948.6 730.6 M951.2 733.2 L951.2 729.5 M951.2 733.2 L953.9 730.6 " stroke="#e60000" stroke-width="1.8"/><circle cx="951.25" cy="733.25" r="2" fill="#e60000"/>
<text transform="translate(1093,845) rotate(-16.9)" font-family="Liberation Sans" font-size="16" fill="#5e5e5e" stroke="#dfe5d6" stroke-width="1.8" paint-order="stroke" letter-spacing="1.0">Rundweg Bannwald &quot;Waldmoor-Torfstich&quot;</text>
<text transform="translate(1233,842) rotate(-14)" font-family="Liberation Sans" font-size="16.3" fill="#000">nsg_1937</text>
<text transform="translate(1867,620) rotate(-16)" font-family="Liberation Sans" font-size="16" fill="#5e5e5e" stroke="#dfe5d6" stroke-width="1.8" paint-order="stroke">Rundweg</text>
<text x="418" y="284" font-family="Liberation Sans" font-size="16.3" fill="#000">evm</text>
<text x="555" y="254" font-family="Liberation Sans" font-size="16.3" fill="#000">Lactarius helvus</text>
<text x="674" y="302" font-family="Liberation Sans" font-size="16.3" fill="#000">Boletus edulis</text>
<text x="473" y="350" font-family="Liberation Sans" font-size="16.3" fill="#000">Entocybe nitida</text>
<text x="822" y="350" font-family="Liberation Sans" font-size="16.3" fill="#000">Paxillus involutus</text>
<text x="778" y="379" font-family="Liberation Sans" font-size="16.3" fill="#000">vpn</text>
<text x="397" y="443" font-family="Liberation Sans" font-size="16.3" fill="#000">Amanita fulva</text>
<text x="1743" y="437" font-family="Liberation Sans" font-size="16.3" fill="#000">vph</text>
<text x="1171" y="464" font-family="Liberation Sans" font-size="16.3" fill="#000">vpb</text>
<text x="1000" y="547" font-family="Liberation Sans" font-size="16.3" fill="#000">Leccinum sp.</text>
<text x="1098" y="563" font-family="Liberation Sans" font-size="16.3" fill="#000">Amanita fulva</text>
<text x="1614" y="548" font-family="Liberation Sans" font-size="16.3" fill="#000">Russula claroflava</text>
<text x="1793" y="586" font-family="Liberation Sans" font-size="16.3" fill="#000">Russula claroflava</text>
<text x="953" y="669" font-family="Liberation Sans" font-size="16.3" fill="#000">Russula claroflava</text>
<text x="1059" y="693" font-family="Liberation Sans" font-size="16.3" fill="#000">Amanita rubescens</text>
<text x="590" y="693" font-family="Liberation Sans" font-size="16.3" fill="#000">Russula betularum</text>
<text x="1442" y="687" font-family="Liberation Sans" font-size="16.3" fill="#000">Imleria badia</text>
<text x="1299" y="711" font-family="Liberation Sans" font-size="16.3" fill="#000">Russula paludosa</text>
<text x="693" y="731" font-family="Liberation Sans" font-size="16.3" fill="#000">Leccinum holopus</text>
<text x="341" y="755" font-family="Liberation Sans" font-size="16.3" fill="#000">mis</text>
<text x="750" y="759" font-family="Liberation Sans" font-size="16.3" fill="#000">sma</text>
<text x="1508" y="746" font-family="Liberation Sans" font-size="16.3" fill="#000">Stereum rugosum</text>
<text x="1350" y="779" font-family="Liberation Sans" font-size="16.3" fill="#000">Trametes versicolor</text>
<text x="622" y="821" font-family="Liberation Sans" font-size="16.3" fill="#000">Gomphidius roseus</text>
<text x="1024" y="822" font-family="Liberation Sans" font-size="16.3" fill="#000">Piptoporus betulinus</text>
<text x="829" y="841" font-family="Liberation Sans" font-size="16.3" fill="#000">Panellus violaceofulvus</text>
<text x="1053" y="843" font-family="Liberation Sans" font-size="16.3" fill="#000">Lentinellus cochleatus</text>
<text x="488" y="852" font-family="Liberation Sans" font-size="16.3" fill="#000">Imleria badia</text>
<text x="602" y="862" font-family="Liberation Sans" font-size="16.3" fill="#000">Entocybe nitida</text>
<text x="1267" y="862" font-family="Liberation Sans" font-size="16.3" fill="#000">Phyllotus porrigens</text>
<text x="818" y="869" font-family="Liberation Sans" font-size="16.3" fill="#000">Mycena galopus</text>
<text x="581" y="891" font-family="Liberation Sans" font-size="16.3" fill="#000">Cortinarius rubellus</text>
<text x="831" y="891" font-family="Liberation Sans" font-size="16.3" fill="#000">Hygrophoropsis aurantiaca</text>
<text x="1041" y="893" font-family="Liberation Sans" font-size="16.3" fill="#000">Trichaptum abietinum</text>
<text x="478" y="969" font-family="Liberation Sans" font-size="16.3" fill="#000">Imleria badia</text>
<circle cx="613.75" cy="258.75" r="6.7" fill="#fff" stroke="#000" stroke-width="1.25"/><circle cx="613.75" cy="258.75" r="2.6" fill="#000"/>
<circle cx="686.25" cy="286.25" r="6.7" fill="#fff" stroke="#000" stroke-width="1.25"/><circle cx="686.25" cy="286.25" r="2.6" fill="#000"/>
<circle cx="586.9" cy="355" r="6.7" fill="#fff" stroke="#000" stroke-width="1.25"/><circle cx="586.9" cy="355" r="2.6" fill="#000"/>
<circle cx="932" cy="355" r="6.7" fill="#fff" stroke="#000" stroke-width="1.25"/><circle cx="932" cy="355" r="2.6" fill="#000"/>
<circle cx="398.1" cy="448.75" r="6.7" fill="#fff" stroke="#000" stroke-width="1.25"/><circle cx="398.1" cy="448.75" r="2.6" fill="#000"/>
<circle cx="1083.75" cy="551.75" r="6.7" fill="#fff" stroke="#000" stroke-width="1.25"/><circle cx="1083.75" cy="551.75" r="2.6" fill="#000"/>
<circle cx="1110.75" cy="567.5" r="6.7" fill="#fff" stroke="#000" stroke-width="1.25"/><circle cx="1110.75" cy="567.5" r="2.6" fill="#000"/>
<circle cx="1070" cy="653.25" r="6.7" fill="#fff" stroke="#000" stroke-width="1.25"/><circle cx="1070" cy="653.25" r="2.6" fill="#000"/>
<circle cx="1748.25" cy="542.5" r="6.7" fill="#fff" stroke="#000" stroke-width="1.25"/><circle cx="1748.25" cy="542.5" r="2.6" fill="#000"/>
<circle cx="1810" cy="570" r="6.7" fill="#fff" stroke="#000" stroke-width="1.25"/><circle cx="1810" cy="570" r="2.6" fill="#000"/>
<circle cx="589.5" cy="687" r="6.7" fill="#fff" stroke="#000" stroke-width="1.25"/><circle cx="589.5" cy="687" r="2.6" fill="#000"/>
<circle cx="763.75" cy="678.75" r="6.7" fill="#fff" stroke="#000" stroke-width="1.25"/><circle cx="763.75" cy="678.75" r="2.6" fill="#000"/>
<circle cx="693" cy="735.75" r="6.7" fill="#fff" stroke="#000" stroke-width="1.25"/><circle cx="693" cy="735.75" r="2.6" fill="#000"/>
<circle cx="638.75" cy="804.5" r="6.7" fill="#fff" stroke="#000" stroke-width="1.25"/><circle cx="638.75" cy="804.5" r="2.6" fill="#000"/>
<circle cx="572" cy="857" r="6.7" fill="#fff" stroke="#000" stroke-width="1.25"/><circle cx="572" cy="857" r="2.6" fill="#000"/>
<circle cx="602" cy="867" r="6.7" fill="#fff" stroke="#000" stroke-width="1.25"/><circle cx="602" cy="867" r="2.6" fill="#000"/>
<circle cx="580.5" cy="885.75" r="6.7" fill="#fff" stroke="#000" stroke-width="1.25"/><circle cx="580.5" cy="885.75" r="2.6" fill="#000"/>
<circle cx="1183.75" cy="698" r="6.7" fill="#fff" stroke="#000" stroke-width="1.25"/><circle cx="1183.75" cy="698" r="2.6" fill="#000"/>
<circle cx="998" cy="826.25" r="6.7" fill="#fff" stroke="#000" stroke-width="1.25"/><circle cx="998" cy="826.25" r="2.6" fill="#000"/>
<circle cx="1023.75" cy="826.25" r="6.7" fill="#fff" stroke="#000" stroke-width="1.25"/><circle cx="1023.75" cy="826.25" r="2.6" fill="#000"/>
<circle cx="1053" cy="845.75" r="6.7" fill="#fff" stroke="#000" stroke-width="1.25"/><circle cx="1053" cy="845.75" r="2.6" fill="#000"/>
<circle cx="936.25" cy="863.75" r="6.7" fill="#fff" stroke="#000" stroke-width="1.25"/><circle cx="936.25" cy="863.75" r="2.6" fill="#000"/>
<circle cx="972" cy="856.75" r="6.7" fill="#fff" stroke="#000" stroke-width="1.25"/><circle cx="972" cy="856.75" r="2.6" fill="#000"/>
<circle cx="1028" cy="873.75" r="6.7" fill="#fff" stroke="#000" stroke-width="1.25"/><circle cx="1028" cy="873.75" r="2.6" fill="#000"/>
<circle cx="1060" cy="877.5" r="6.7" fill="#fff" stroke="#000" stroke-width="1.25"/><circle cx="1060" cy="877.5" r="2.6" fill="#000"/>
<circle cx="1412" cy="695.5" r="6.7" fill="#fff" stroke="#000" stroke-width="1.25"/><circle cx="1412" cy="695.5" r="2.6" fill="#000"/>
<circle cx="1442" cy="691.75" r="6.7" fill="#fff" stroke="#000" stroke-width="1.25"/><circle cx="1442" cy="691.75" r="2.6" fill="#000"/>
<circle cx="1423" cy="783.75" r="6.7" fill="#fff" stroke="#000" stroke-width="1.25"/><circle cx="1423" cy="783.75" r="2.6" fill="#000"/>
<circle cx="1573.75" cy="750.75" r="6.7" fill="#fff" stroke="#000" stroke-width="1.25"/><circle cx="1573.75" cy="750.75" r="2.6" fill="#000"/>
<circle cx="1266.75" cy="866.75" r="6.7" fill="#fff" stroke="#000" stroke-width="1.25"/><circle cx="1266.75" cy="866.75" r="2.6" fill="#000"/>
<circle cx="478.3" cy="955.8" r="6.7" fill="#fff" stroke="#000" stroke-width="1.25"/><circle cx="478.3" cy="955.8" r="2.6" fill="#000"/>
<rect x="911" y="930.5" width="144" height="42" fill="#ffff00" stroke="#000" stroke-width="2"/>
<text x="981" y="959" text-anchor="middle" font-family="Liberation Sans" font-weight="bold" font-size="20.5" fill="#000">Bild 17</text>
</svg>
<div class="a" style="left:0px;top:999px;width:1920px;height:31px;background:#f0f0f0"></div>
<div class="a" style="left:0px;top:1030px;width:1920px;height:1px;background:#1e1e1e"></div>
<div class="a" style="left:4px;top:1004px;width:279px;height:22px;background:#fff;border:1px solid #7a7a7a"></div>
<svg class="a" style="left:12px;top:1008px" width="16" height="16"><circle cx="6" cy="6" r="4.5" fill="none" stroke="#777" stroke-width="1.4"/><path d="M9.5 9.5L14 14" stroke="#777" stroke-width="1.8"/></svg>
<div class="t" style="left:33px;top:1008px;font-size:13px;line-height:15px;color:#6d6d6d">Zu suchender Typ (Strg+K)</div>
<div class="t" style="left:924px;top:1008px;font-size:12.6px;line-height:14px;">Koordinate</div>
<div class="a" style="left:988px;top:1004px;width:133px;height:22px;background:#fff;border:1px solid #7a7a7a"></div>
<div class="t" style="left:994px;top:1008px;font-size:12.9px;line-height:15px;">473644.3,5397447.5</div>
<svg class="a" style="left:1123px;top:1004px" width="22" height="22"><path d="M4 3Q9 0 12 5L14 11Q14 15 10 15Q6 15 5 11Z" fill="#fff" stroke="#222" stroke-width="1.6"/><path d="M6 5L11 10" stroke="#222" stroke-width="1.4"/><circle cx="12" cy="15" r="4.5" fill="#fff" stroke="#222" stroke-width="1.6"/><circle cx="12" cy="15" r="1.6" fill="#222"/><path d="M16 3L17 4M19 2L20 3M18 6L19 7" stroke="#222" stroke-width="1.2"/></svg>
<div class="t" style="left:1157px;top:1008px;font-size:12.2px;line-height:14px;">Maßstab</div>
<div class="a" style="left:1208px;top:1004px;width:91px;height:22px;background:#fff;border:1px solid #7a7a7a"></div>
<div class="t" style="left:1213px;top:1008px;font-size:13px;line-height:15px;">1:625</div>
<svg class="a" style="left:1280px;top:1010px" width="14" height="10"><path d="M1.5 2L6.5 7L11.5 2" fill="none" stroke="#333" stroke-width="1.2"/></svg>
<svg class="a" style="left:1308px;top:1004px" width="20" height="22"><path d="M5 10V6.5A5 5 0 0 1 15 6.5V10" fill="none" stroke="#666" stroke-width="2.4"/><rect x="3" y="10" width="14" height="11" rx="1.5" fill="#666"/></svg>
<div class="t" style="left:1335px;top:1008px;font-size:13px;line-height:15px;">Vergrößerung</div>
<div class="a" style="left:1417px;top:1004px;width:87px;height:22px;background:#fff;border:1px solid #7a7a7a"></div>
<div class="t" style="left:1421px;top:1008px;font-size:13px;line-height:15px;">100%</div>
<div class="a" style="left:1488px;top:1005px;width:15px;height:20px;background:#ececec;border:1px solid #b8b8b8"></div>
<svg class="a" style="left:1489px;top:1006px" width="14" height="20"><path d="M3 8L7 4L11 8Z M3 12L7 16L11 12Z" fill="#222"/></svg>
<div class="t" style="left:1514px;top:1008px;font-size:13px;line-height:15px;">Drehung</div>
<div class="a" style="left:1570px;top:1004px;width:85px;height:22px;background:#fff;border:1px solid #7a7a7a"></div>
<div class="t" style="left:1574px;top:1008px;font-size:13px;line-height:15px;">0,0 °</div>
<div class="a" style="left:1639px;top:1005px;width:15px;height:20px;background:#ececec;border:1px solid #b8b8b8"></div>
<svg class="a" style="left:1640px;top:1006px" width="14" height="20"><path d="M3 8L7 4L11 8Z M3 12L7 16L11 12Z" fill="#222"/></svg>
<svg class="a" style="left:1661px;top:1006px" width="17" height="17"><rect x="0.5" y="0.5" width="16" height="16" fill="#fff" stroke="#333"/><path d="M3.5 8.5L7 12L13.5 4.5" fill="none" stroke="#333" stroke-width="1.3"/></svg>
<div class="t" style="left:1684px;top:1008px;font-size:12.8px;line-height:15px;">Zeichnen</div>
<svg class="a" style="left:1751px;top:1006px" width="20" height="18"><circle cx="9.5" cy="9" r="8" fill="#9a9a9a" stroke="#444" stroke-width="0.8"/><ellipse cx="9.5" cy="9" rx="3.6" ry="8" fill="none" stroke="#556" stroke-width="0.8"/><path d="M1.5 9H17.5M2.7 5.4H16.3M2.7 12.6H16.3" stroke="#556" stroke-width="0.8"/></svg>
<div class="t" style="left:1775px;top:1008px;font-size:12px;line-height:14px;">EPSG:25832</div>
<svg class="a" style="left:1862px;top:1005px" width="22" height="22"><ellipse cx="10" cy="9" rx="9.5" ry="7.5" fill="#555"/><path d="M12 15L17 20L16 13Z" fill="#555"/><circle cx="6" cy="9" r="1.4" fill="#fff"/><circle cx="10" cy="9" r="1.4" fill="#fff"/><circle cx="14" cy="9" r="1.4" fill="#fff"/></svg>
<svg class="a" style="left:1896px;top:1005px" width="22" height="22"><path d="M1 4H6Q6 1 8.5 1Q11 1 11 4H14V9Q17 9 17 11.5Q17 14 14 14V18H1Z" fill="#c4c4c4" stroke="#444" stroke-width="1.2"/><path d="M1 4L14 18" stroke="#444"/><path d="M15 3Q20 3 20 9Q20 14 15 14" fill="none" stroke="#444" stroke-width="1.2"/></svg>
<svg class="a" style="left:0;top:0" width="1920" height="1034">
<g transform="translate(15,60)"><path d="M4.5 1.5H14L19.5 7V22.5H4.5Z" fill="#fff" stroke="#555" stroke-width="1"/><path d="M14 1.5V7H19.5" fill="none" stroke="#555" stroke-width="1"/></g>
<g transform="translate(46,60)"><path d="M1 4H8L10 6H19V18H1Z" fill="#f2c417" stroke="#d9a90c" stroke-width="0.8"/><path d="M1 9H22L20 19H1Z" fill="#ffd94e" stroke="#d9a90c" stroke-width="0.8"/></g>
<g transform="translate(77,60)"><rect x="2" y="1.5" width="20" height="20.5" rx="2" fill="#5b84b9" stroke="#41648f" stroke-width="1"/><rect x="5.5" y="2.5" width="13" height="8.5" fill="#fff"/><path d="M7 4.8H17M7 6.8H17M7 8.8H17" stroke="#444" stroke-width="0.55"/><rect x="6.5" y="15" width="11" height="7" fill="#e9eef4"/><rect x="8" y="16.5" width="2.5" height="4" fill="#2a3a50"/></g>
<g transform="translate(108,60)"><path d="M5 2H17L22 7V21H5Z" fill="#fff" stroke="#555" stroke-width="0.9"/><path d="M2 2H13V6H6V22H2Z" fill="#f2d84c" stroke="#b39a1a" stroke-width="0.8"/><rect x="13" y="13" width="9" height="9" rx="1.5" fill="#e6c619" stroke="#b89c10" stroke-width="0.6"/><path d="M17.5 14.5V20.5M14.5 17.5H20.5M15.4 15.4L19.6 19.6M19.6 15.4L15.4 19.6" stroke="#fff" stroke-width="1"/></g>
<g transform="translate(139,60)"><path d="M1.5 2H17L22.5 7.5V20H1.5Z" fill="#fff" stroke="#555" stroke-width="0.9"/><rect x="3.5" y="4" width="16" height="14" fill="#eef2f8"/><path d="M8 6 L20 20" stroke="#5a4a2a" stroke-width="3.8"/><path d="M8 6 L20 20" stroke="#e5d08a" stroke-width="2.2"/><circle cx="8" cy="6" r="3" fill="none" stroke="#777" stroke-width="1.5"/></g>
<g transform="translate(170,60)"><circle cx="6.5" cy="5.5" r="4.2" fill="#d8572a"/><path d="M13 10L21 2" stroke="#4a7aa8" stroke-width="2.6" stroke-linecap="round"/><rect x="2" y="12" width="8" height="9" fill="#7fae7f"/><text x="13" y="21" font-family="Liberation Sans" font-size="11" fill="#444">a</text></g>
<g transform="translate(216,60)"><path d="M7 21C5 18 2.5 14.5 2.5 13C2.5 11.5 4.5 11.5 5.5 13L7 15V5C7 3.5 9.2 3.5 9.2 5V11V3C9.2 1.5 11.5 1.5 11.5 3V11V3.8C11.5 2.3 13.8 2.3 13.8 3.8V11V5.5C13.8 4 16 4 16 5.5V15C16 18 15 20 14 22H7.5Z" fill="#fff" stroke="#000" stroke-width="1.1" stroke-linejoin="round"/></g>
<g transform="translate(246,60)"><rect x="5" y="5" width="14" height="14" fill="#f2de3c" stroke="#a89a20" stroke-width="0.6"/><path d="M12 0L16 4.5H8ZM12 24L16 19.5H8ZM0 12L4.5 8V16ZM24 12L19.5 8V16Z" fill="#4f7fb8"/><path d="M12 4V20M4 12H20" stroke="#4f7fb8" stroke-width="2"/></g>
<g transform="translate(277,60)"><path d="M8.100000000000001 13.899999999999999 L2 22" stroke="#333" stroke-width="4.2" stroke-linecap="round"/><path d="M7.600000000000001 14.399999999999999 L2.6 21.4" stroke="#e8d44a" stroke-width="2.4" stroke-linecap="round"/><circle cx="13" cy="9" r="7" fill="#f4f4f4" stroke="#3a3a3a" stroke-width="1.3"/><path d="M13 5V13M9 9H17" stroke="#3f73b0" stroke-width="2.4"/></g>
<g transform="translate(308,60)"><path d="M8.100000000000001 13.899999999999999 L2 22" stroke="#333" stroke-width="4.2" stroke-linecap="round"/><path d="M7.600000000000001 14.399999999999999 L2.6 21.4" stroke="#e8d44a" stroke-width="2.4" stroke-linecap="round"/><circle cx="13" cy="9" r="7" fill="#f4f4f4" stroke="#3a3a3a" stroke-width="1.3"/><path d="M9 9H17" stroke="#3f73b0" stroke-width="2.4"/></g>
<g transform="translate(339,60)"><path d="M4 1H11L8.5 3.5L11 6L8 9L5.5 6.5L4 8Z M23 1H16L18.5 3.5L16 6L19 9L21.5 6.5L23 8Z M23 21H16L18.5 18.5L16 16L19 13L21.5 15.5L23 14Z" fill="#4f7fb8"/><path d="M7.45 15.55 L2 22" stroke="#333" stroke-width="4.2" stroke-linecap="round"/><path d="M6.95 16.05 L2.6 21.4" stroke="#e8d44a" stroke-width="2.4" stroke-linecap="round"/><circle cx="12" cy="11" r="6.5" fill="#f4f4f4" stroke="#3a3a3a" stroke-width="1.3"/></g>
<g transform="translate(370,60)"><rect x="3" y="2" width="10" height="12" fill="#f2de3c" stroke="#888" stroke-width="0.8"/><path d="M8.75 14.25 L2 22" stroke="#333" stroke-width="4.2" stroke-linecap="round"/><path d="M8.25 14.75 L2.6 21.4" stroke="#e8d44a" stroke-width="2.4" stroke-linecap="round"/><circle cx="14" cy="9" r="7.5" fill="#eeeeee" stroke="#3a3a3a" stroke-width="1.3"/></g>
<g transform="translate(401,60)"><rect x="3" y="3" width="10" height="11" fill="#f0f0f0" stroke="#777" stroke-width="0.8"/><path d="M8.75 14.25 L2 22" stroke="#333" stroke-width="4.2" stroke-linecap="round"/><path d="M8.25 14.75 L2.6 21.4" stroke="#e8d44a" stroke-width="2.4" stroke-linecap="round"/><circle cx="14" cy="9" r="7.5" fill="#eeeeee" stroke="#3a3a3a" stroke-width="1.3"/></g>
<g transform="translate(432,60)"><path d="M6 16L2 21" stroke="#c3c3c3" stroke-width="3" stroke-linecap="round"/><circle cx="13" cy="9" r="7.5" fill="#ececec" stroke="#b0b0b0" stroke-width="1.2"/><text x="8" y="13" font-family="Liberation Sans" font-size="9" font-weight="bold" fill="#b0b0b0">1:1</text><rect x="3" y="4" width="4" height="8" fill="none" stroke="#c3c3c3"/></g>
<g transform="translate(463,60)"><path d="M7.75 14.25 L2 22" stroke="#333" stroke-width="4.2" stroke-linecap="round"/><path d="M7.25 14.75 L2.6 21.4" stroke="#e8d44a" stroke-width="2.4" stroke-linecap="round"/><circle cx="13" cy="9" r="7.5" fill="#f4f4f4" stroke="#3a3a3a" stroke-width="1.3"/><rect x="14" y="13" width="10" height="10" fill="#5b84b9"/><path d="M21 15L16.5 18L21 21" fill="none" stroke="#fff" stroke-width="1.8"/></g>
<g transform="translate(494,60)"><path d="M6 16L2 21" stroke="#c3c3c3" stroke-width="3" stroke-linecap="round"/><circle cx="13" cy="9" r="7.5" fill="#ececec" stroke="#b0b0b0" stroke-width="1.2"/><rect x="14" y="13" width="10" height="10" fill="#c3c3c3"/><path d="M17 15L21.5 18L17 21" fill="none" stroke="#fff" stroke-width="1.8"/></g>
<g transform="translate(526,60)"><path d="M3 2H19V20H5L3 18Z" fill="#e4e4e4" stroke="#888" stroke-width="0.9"/><path d="M3 2V18" stroke="#aaa" stroke-width="2"/><rect x="13" y="13" width="9" height="9" rx="1.5" fill="#e6c619" stroke="#b89c10" stroke-width="0.6"/><path d="M17.5 14.5V20.5M14.5 17.5H20.5M15.4 15.4L19.6 19.6M19.6 15.4L15.4 19.6" stroke="#fff" stroke-width="1"/></g>
<g transform="translate(558,60)"><path d="M4 1H14V19L9 15L4 19Z" fill="#5b84b9" stroke="#41648f" stroke-width="0.8"/><rect x="11" y="13" width="9" height="9" rx="1.5" fill="#e6c619" stroke="#b89c10" stroke-width="0.6"/><path d="M15.5 14.5V20.5M12.5 17.5H18.5M13.4 15.4L17.6 19.6M17.6 15.4L13.4 19.6" stroke="#fff" stroke-width="1"/></g>
<g transform="translate(587,60)"><path d="M2 2H20V21H5L2 18Z" fill="#e4e4e4" stroke="#888" stroke-width="0.9"/><path d="M12 1H16V10L14 8L12 10Z" fill="#5b84b9" stroke="#41648f" stroke-width="0.6"/></g>
<g transform="translate(618,60)"><path d="M3.5 11A8.5 8.5 0 0 1 18 5" fill="none" stroke="#3c7fc4" stroke-width="4"/><path d="M15 1L22 2L20 9Z" fill="#3c7fc4"/><path d="M20.5 13A8.5 8.5 0 0 1 6 19" fill="none" stroke="#3c7fc4" stroke-width="4"/><path d="M9 23L2 22L4 15Z" fill="#3c7fc4"/></g>
<g transform="translate(662,60)"><circle cx="8.5" cy="8.5" r="8" fill="#5b8cc4" stroke="#3f6fa8" stroke-width="0.8"/><text x="6" y="14" font-family="Liberation Serif" font-style="italic" font-weight="bold" font-size="13" fill="#fff">i</text><path d="M12 10L12 22L15 19L17.5 23.5L19.5 22.5L17 18L21 18Z" fill="#fff" stroke="#333" stroke-width="0.9"/></g>
<g transform="translate(693,60)"><circle cx="9" cy="9" r="7" fill="none" stroke="#c3c3c3" stroke-width="3"/><circle cx="9" cy="9" r="3" fill="#c3c3c3"/><path d="M12 10L12 22L15 19L17.5 23.5L19.5 22.5L17 18L21 18Z" fill="#f0f0f0" stroke="#c3c3c3" stroke-width="0.9"/></g>
<g transform="translate(741,60)"><rect x="1.5" y="1.5" width="20" height="19" fill="#e6e6cc" stroke="#333" stroke-width="0.8" stroke-dasharray="1.5,1.5"/><rect x="2" y="2" width="13" height="13" fill="#f2de3c"/><path d="M10 8L10 21L13.5 18L16 23L18.5 22L16 17L20.5 17Z" fill="#fff" stroke="#333" stroke-width="0.9"/></g>
<g transform="translate(787,60)"><rect x="1" y="2" width="14" height="14" fill="#e4e4e4" stroke="#888" stroke-width="0.9"/><rect x="6" y="8" width="13" height="13" fill="#f2de3c" stroke="#a89a20" stroke-width="0.6"/><path d="M3 6H13M3 10H13" stroke="#888" stroke-width="1.5"/></g>
<g transform="translate(833,60)"><rect x="1" y="1" width="14" height="14" fill="#f2de3c" stroke="#b8a828" stroke-width="0.6"/><rect x="11" y="11" width="12" height="12" rx="3" fill="#d83b3b"/><circle cx="17" cy="17" r="3.5" fill="none" stroke="#fff" stroke-width="1.3"/><path d="M14.5 19.5L19.5 14.5" stroke="#fff" stroke-width="1.3"/></g>
<g transform="translate(863,60)"><rect x="2" y="2" width="20" height="20" fill="#fff" stroke="#6a98c8" stroke-width="1.2"/><rect x="2" y="2" width="20" height="4" fill="#6a98c8"/><path d="M5 9H8M10 9H19M5 12H8M10 12H19M5 15H8M10 15H19M5 18H8M10 18H19" stroke="#6a98c8" stroke-width="1.2"/></g>
<g transform="translate(894,60)"><rect x="2" y="1" width="20" height="21" fill="none" stroke="#555" stroke-width="1.2"/><path d="M1 22H23" stroke="#555" stroke-width="2"/><path d="M2 6H22M2 12H22M2 17H22" stroke="#999" stroke-width="0.8"/><circle cx="7" cy="6" r="2" fill="#e07070"/><circle cx="12" cy="6" r="2" fill="#e07070"/><circle cx="17" cy="6" r="2" fill="#e07070"/><circle cx="6" cy="12" r="2" fill="#7cc07c"/><circle cx="11" cy="12" r="2" fill="#7cc07c"/><circle cx="18" cy="12" r="2" fill="#7cc07c"/><circle cx="7" cy="17" r="2" fill="#5b9bd0"/><circle cx="12" cy="17" r="2" fill="#5b9bd0"/><circle cx="17" cy="17" r="2" fill="#5b9bd0"/></g>
<g transform="translate(925,60)"><path d="M19.50 12.00L23.00 12.00M17.30 17.30L19.78 19.78M12.00 19.50L12.00 23.00M6.70 17.30L4.22 19.78M4.50 12.00L1.00 12.00M6.70 6.70L4.22 4.22M12.00 4.50L12.00 1.00M17.30 6.70L19.78 4.22" stroke="#6a9ad4" stroke-width="3.4"/><circle cx="12" cy="12" r="8.0" fill="#6a9ad4"/><circle cx="12" cy="12" r="3.2" fill="#f0f0f0"/></g>
<g transform="translate(955,60)"><path d="M19 5V2H4L12 12L4 21H19V18" fill="none" stroke="#9a23a8" stroke-width="3" stroke-linejoin="miter"/></g>
<g transform="translate(987,60)"><path d="M2 4H22M2 2V6M22 2V6" stroke="#3b4a78" stroke-width="1.6"/><rect x="1.5" y="11" width="21" height="10" fill="#c8c8c8" stroke="#555" stroke-width="1"/><path d="M5 11V15M8 11V17M11 11V15M14 11V17M17 11V15M20 11V17" stroke="#555" stroke-width="1"/></g>
<g transform="translate(1034,60)"><path d="M3 2H21Q23 2 23 4V13Q23 15 21 15H11L6 19V15H3Q1 15 1 13V4Q1 2 3 2Z" fill="#f5e66b" stroke="#b8a840" stroke-width="0.9"/><circle cx="6.5" cy="19" r="3.2" fill="#7aa870" stroke="#4a7a40" stroke-width="0.8"/></g>
<g transform="translate(1064,60)"><path d="M3 2H21V16H9L4 22V16H3Z" fill="#fff" stroke="#666" stroke-width="1"/><text x="7" y="14" font-family="Liberation Serif" font-size="14" fill="#333">T</text></g>
<g transform="translate(15,94)"><path d="M1 10L10 7L13 18L4 21Z" fill="#d9622b" stroke="#a04010" stroke-width="0.6"/><path d="M4 6L13 4L15 15L6 17Z" fill="#f2c417" stroke="#b89010" stroke-width="0.6"/><path d="M9 1L21 3L19 15L7 13Z" fill="#5b8cc4" stroke="#3a5f8a" stroke-width="0.8"/><rect x="15" y="15" width="9" height="9" rx="2" fill="#5a9a5a" stroke="#3f7a3f" stroke-width="0.6"/><path d="M19.5 16.6V22.4M16.6 19.5H22.4" stroke="#fff" stroke-width="1.8"/></g>
<g transform="translate(46,94)"><path d="M1 10L8 14L22 8V20L8 24L1 19Z" fill="#e0b818" stroke="#222" stroke-width="0.9"/><path d="M8 14L22 8V20L8 24Z" fill="#f8ea70" stroke="#222" stroke-width="0.9"/><circle cx="12" cy="7.5" r="7" fill="#8ab0e0" stroke="#334" stroke-width="0.6"/><path d="M7 5Q9 2 12 3Q11 6 8.5 7ZM13 6Q16 4 18 7Q17 10 14 11Q12 9 13 6Z" fill="#1f3f70"/><rect x="14" y="15" width="9" height="9" rx="1.5" fill="#e6c619" stroke="#b89c10" stroke-width="0.6"/><path d="M18.5 16.5V22.5M15.5 19.5H21.5M16.4 17.4L20.6 21.6M20.6 17.4L16.4 21.6" stroke="#fff" stroke-width="1"/></g>
<g transform="translate(77,94)"><path d="M2 2L9 20L14 7L22 3" fill="none" stroke="#333" stroke-width="1.4"/><circle cx="9" cy="20" r="1.6" fill="#fff" stroke="#333" stroke-width="0.9"/><rect x="1" y="1" width="2.5" height="2.5" fill="#fff" stroke="#333" stroke-width="0.7" transform="rotate(45 2.2 2.2)"/><rect x="13" y="6" width="2.5" height="2.5" fill="#fff" stroke="#333" stroke-width="0.7"/><rect x="20.5" y="2" width="2.5" height="2.5" fill="#fff" stroke="#333" stroke-width="0.7"/><rect x="14" y="14" width="9" height="9" rx="1.5" fill="#e6c619" stroke="#b89c10" stroke-width="0.6"/><path d="M18.5 15.5V21.5M15.5 18.5H21.5M16.4 16.4L20.6 20.6M20.6 16.4L16.4 20.6" stroke="#fff" stroke-width="1"/></g>
<g transform="translate(108,94)"><path d="M2 23C4 14 10 5 22 1C20 8 14 16 5 19Z" fill="#7a9cd0" stroke="#3f5f90" stroke-width="0.8"/><path d="M2 23L16 7" stroke="#3f5f90" stroke-width="0.8"/><rect x="14" y="14" width="9" height="9" rx="1.5" fill="#e6c619" stroke="#b89c10" stroke-width="0.6"/><path d="M18.5 15.5V21.5M15.5 18.5H21.5M16.4 16.4L20.6 20.6M20.6 16.4L16.4 20.6" stroke="#fff" stroke-width="1"/></g>
<g transform="translate(140,94)"><rect x="1" y="6" width="21" height="11" fill="#5b8cc4" stroke="#2e5a90" stroke-width="0.9"/><path d="M4 2V6M8 2V6M12 2V6M16 2V6M20 2V6M4 17V21M8 17V21M12 17V21M16 17V21" stroke="#223" stroke-width="1.2"/><rect x="14" y="14" width="9" height="9" rx="1.5" fill="#e6c619" stroke="#b89c10" stroke-width="0.6"/><path d="M18.5 15.5V21.5M15.5 18.5H21.5M16.4 16.4L20.6 20.6M20.6 16.4L16.4 20.6" stroke="#fff" stroke-width="1"/></g>
<g transform="translate(177,94)"><rect x="1" y="1" width="20" height="20" rx="2" fill="#9fb6d4" stroke="#4a6a90" stroke-width="1"/><path d="M3 4L10 17L17 4" fill="none" stroke="#333" stroke-width="1.2"/><circle cx="10" cy="17" r="1.5" fill="#fff" stroke="#333" stroke-width="0.8"/><rect x="14" y="14" width="9" height="9" rx="1.5" fill="#e6c619" stroke="#b89c10" stroke-width="0.6"/><path d="M18.5 15.5V21.5M15.5 18.5H21.5M16.4 16.4L20.6 20.6M20.6 16.4L16.4 20.6" stroke="#fff" stroke-width="1"/></g>
<g transform="translate(222,94)"><path d="M3 18L12 2L16 4L7 20Z M7 21L15 5L19 7L10 22Z" fill="#c3c3c3" stroke="#b0b0b0" stroke-width="0.6"/><path d="M17 19L22 19L19.5 22Z" fill="#a0a0a0"/></g>
<g transform="translate(254,94)"><path d="M7 22L5 23L5.5 19L17 2L21 4.5L9.5 21Z" fill="#f2d84c" stroke="#6a5a20" stroke-width="0.9"/><path d="M5 23L5.5 19L7.5 20.5Z" fill="#555"/></g>
<g transform="translate(283,94)"><rect x="2" y="1.5" width="20" height="20.5" rx="2" fill="#c3c3c3"/><rect x="6" y="3" width="12" height="7" fill="#e6e6e6"/><rect x="6.5" y="15" width="11" height="7" fill="#e6e6e6"/></g>
<g transform="translate(315,94)"><circle cx="4" cy="13" r="2.3" fill="none" stroke="#c3c3c3" stroke-width="1.5"/><circle cx="11" cy="4" r="2.3" fill="none" stroke="#c3c3c3" stroke-width="1.5"/><circle cx="18" cy="8" r="2.3" fill="none" stroke="#c3c3c3" stroke-width="1.5"/><rect x="12" y="13" width="10" height="10" rx="1.5" fill="#c3c3c3"/></g>
<g transform="translate(346,94)"><circle cx="5" cy="4" r="2.5" fill="none" stroke="#c3c3c3" stroke-width="1"/><path d="M5 6L3 22M9 5H18M11 10L21 20M20 10L11 20" stroke="#c3c3c3" stroke-width="1.6"/></g>
<g transform="translate(392,94)"><rect x="2" y="2" width="18" height="20" fill="#e0e0e0" stroke="#c3c3c3"/><path d="M4 6H18M4 10H18M4 14H18M4 18H18" stroke="#c3c3c3" stroke-width="1.5"/><path d="M10 20L21 3" stroke="#b8b8b8" stroke-width="3"/></g>
<g transform="translate(422,94)"><rect x="2" y="2" width="19" height="3" fill="#c3c3c3"/><path d="M4 7H19L18 22H5Z" fill="none" stroke="#c3c3c3" stroke-width="2"/><path d="M9 9V20M14 9V20" stroke="#c3c3c3" stroke-width="1.6"/></g>
<g transform="translate(454,94)"><path d="M2 6L22 14M2 14L22 8" stroke="#c3c3c3" stroke-width="1.4"/><circle cx="19" cy="18" r="3" fill="none" stroke="#c3c3c3" stroke-width="1.5"/><circle cx="19" cy="4" r="3" fill="none" stroke="#c3c3c3" stroke-width="1.5"/></g>
<g transform="translate(485,94)"><path d="M7 2H15L19 6V18H7Z M3 6H11L15 10V22H3Z" fill="#eeeeee" stroke="#c3c3c3" stroke-width="1"/><path d="M5 13H12M5 16H12M5 19H12" stroke="#c3c3c3"/></g>
<g transform="translate(516,94)"><rect x="3" y="3" width="16" height="20" fill="#eeeeee" stroke="#c3c3c3"/><rect x="7" y="1" width="8" height="4" fill="#c3c3c3"/><path d="M6 9H16M6 12H16M6 15H16M6 18H16" stroke="#c3c3c3"/></g>
<g transform="translate(547,94)"><path d="M20 20C20 12 14 9 7 10V5L1 11L7 17V13C12 13 16 15 20 20Z" fill="#c3c3c3"/></g>
<g transform="translate(578,94)"><path d="M4 20C4 12 10 9 17 10V5L23 11L17 17V13C12 13 8 15 4 20Z" fill="#c3c3c3"/></g>
<g transform="translate(622,94)"><path d="M5 7H22V17H5L1 12Z" fill="#f5e04a" stroke="#b59a10" stroke-width="0.8"/><text x="5.5" y="15.5" font-family="Liberation Sans" font-weight="bold" font-size="9.5" fill="#333">abc</text></g>
<g transform="translate(654,94)"><path d="M9 9L9 1A8 8 0 0 1 17 9Z" fill="#d83b3b"/><path d="M9 9L17 9A8 8 0 0 1 5 16Z" fill="#f2d84c"/><path d="M9 9L5 16A8 8 0 0 1 9 1Z" fill="#5fb04f"/><rect x="11" y="13" width="3" height="9" fill="#f2d84c"/><rect x="15" y="10" width="3" height="12" fill="#2a8a2a"/><rect x="19" y="16" width="3" height="6" fill="#a02020"/></g>
<g transform="translate(691,94)"><path d="M5 7H19V17H5L1 12Z" fill="#d4e4f4" stroke="#5a84b9" stroke-width="0.8"/><text x="5.5" y="15.5" font-family="Liberation Sans" font-weight="bold" font-size="9.5" fill="#334">ab</text><circle cx="17" cy="19" r="4" fill="#c02020"/><path d="M15 8V16" stroke="#555"/></g>
<g transform="translate(722,94)"><path d="M5 7H22V17H5L1 12Z" fill="#fbe0e0" stroke="#d83b3b" stroke-width="0.8"/><text x="5.5" y="15.5" font-family="Liberation Sans" font-weight="bold" font-size="9.5" fill="#d02020">abc</text></g>
<g transform="translate(760,94)"><path d="M5 7H19V17H5L1 12Z" fill="#f5e04a" stroke="#b59a10" stroke-width="0.8"/><text x="5.5" y="15.5" font-family="Liberation Sans" font-weight="bold" font-size="9.5" fill="#333">ab</text><circle cx="17" cy="19" r="4" fill="#c02020"/><path d="M15 8V16" stroke="#555"/></g>
<g transform="translate(791,94)"><path d="M5 7H22V17H5L1 12Z" fill="#f5e04a" stroke="#b59a10" stroke-width="0.8"/><text x="5.5" y="15.5" font-family="Liberation Sans" font-weight="bold" font-size="9.5" fill="#333">abc</text><path d="M7 20Q14 14 21 20Q14 25 7 20Z" fill="#fff" stroke="#3a5f8a" stroke-width="0.9"/><circle cx="14" cy="20" r="2" fill="#1f3f70"/></g>
<g transform="translate(822,94)"><path d="M5 7H22V17H5L1 12Z" fill="#f5e04a" stroke="#b59a10" stroke-width="0.8"/><text x="5.5" y="15.5" font-family="Liberation Sans" font-weight="bold" font-size="9.5" fill="#333">abc</text><rect x="13" y="14" width="10" height="9" rx="1" fill="#3f5f80"/><path d="M15 18.5H20M18 16L20.5 18.5L18 21" stroke="#fff" stroke-width="1.6" fill="none"/></g>
<g transform="translate(853,94)"><path d="M5 7H22V17H5L1 12Z" fill="#f5e04a" stroke="#b59a10" stroke-width="0.8"/><text x="5.5" y="15.5" font-family="Liberation Sans" font-weight="bold" font-size="9.5" fill="#333">abc</text><rect x="13" y="14" width="10" height="9" rx="1" fill="#3f5f80"/><circle cx="18" cy="18.5" r="2.5" fill="none" stroke="#fff" stroke-width="1.4"/></g>
<g transform="translate(884,94)"><path d="M5 7H22V17H5L1 12Z" fill="#f5e04a" stroke="#b59a10" stroke-width="0.8"/><text x="5.5" y="15.5" font-family="Liberation Sans" font-weight="bold" font-size="9.5" fill="#333">abc</text><rect x="13" y="14" width="10" height="9" rx="1" fill="#e0c020"/><path d="M15 21L21 15" stroke="#fff" stroke-width="1.6"/></g>
<g transform="translate(930,94)"><ellipse cx="12" cy="4" rx="10" ry="3" fill="#1e8a2a"/><rect x="2" y="4" width="20" height="16" fill="#1e8a2a"/><ellipse cx="12" cy="20" rx="10" ry="3" fill="#1e8a2a"/><path d="M2 9Q12 12 22 9M2 14Q12 17 22 14" stroke="#0f5a18" fill="none"/><path d="M8 17L15 10" stroke="#eee" stroke-width="2.5"/></g>
<g transform="translate(961,94)"><text x="0" y="21" font-family="Liberation Sans" font-weight="bold" font-size="17" fill="#5fc030" stroke="#2a7a10" stroke-width="0.6">iD</text><path d="M14 6L22 1M17 1H22V6" stroke="#111" stroke-width="2" fill="none"/></g>
<g transform="translate(993,94)"><rect x="1" y="2" width="21" height="20" fill="#5f8a4a" stroke="#2a6a2a" stroke-width="0.8"/><rect x="1" y="2" width="21" height="3" fill="#2a9a2a"/><path d="M1 12Q6 8 10 13T22 12V22H1Z" fill="#6a7a5a"/><rect x="3" y="6" width="8" height="5" fill="#8ab0a0"/></g>
<g transform="translate(1023,94)"><ellipse cx="12" cy="4.5" rx="10" ry="3.5" fill="#5b84b9" stroke="#2e4a70" stroke-width="0.8"/><path d="M2 4.5V19.5A10 3.5 0 0 0 22 19.5V4.5" fill="#5b84b9" stroke="#2e4a70" stroke-width="0.8"/><path d="M2 9.5A10 3.5 0 0 0 22 9.5M2 14.5A10 3.5 0 0 0 22 14.5" fill="none" stroke="#2e4a70" stroke-width="0.8"/></g>
<g transform="translate(1068,94)"><circle cx="11" cy="11" r="9.5" fill="#7aa2d6" stroke="#444" stroke-width="0.8"/><ellipse cx="11" cy="11" rx="4.275" ry="9.5" fill="none" stroke="#556" stroke-width="0.8"/><path d="M1.5 11H20.5M2.9250000000000007 6.725H19.075M2.9250000000000007 15.275H19.075" stroke="#556" stroke-width="0.8"/><rect x="14" y="14" width="10" height="10" rx="1.5" fill="#3f7a3f"/><path d="M16 17H22L19 21Z" fill="#111"/></g>
<g transform="translate(1099,94)"><circle cx="11" cy="11" r="9.5" fill="#7aa2d6" stroke="#444" stroke-width="0.8"/><ellipse cx="11" cy="11" rx="4.275" ry="9.5" fill="none" stroke="#556" stroke-width="0.8"/><path d="M1.5 11H20.5M2.9250000000000007 6.725H19.075M2.9250000000000007 15.275H19.075" stroke="#556" stroke-width="0.8"/><rect x="14" y="14" width="10" height="10" rx="1.5" fill="#5a9a5a"/><circle cx="19" cy="18.5" r="2.6" fill="none" stroke="#fff" stroke-width="1.2"/></g>
<g transform="translate(1130,94)"><circle cx="12" cy="10" r="9.5" fill="#6a8ab8" stroke="#444" stroke-width="0.8"/><ellipse cx="12" cy="10" rx="4.275" ry="9.5" fill="none" stroke="#556" stroke-width="0.8"/><path d="M2.5 10H21.5M3.9250000000000007 5.725H20.075M3.9250000000000007 14.275H20.075" stroke="#556" stroke-width="0.8"/><circle cx="7" cy="19" r="3.8" fill="#111"/><circle cx="17" cy="19" r="3.8" fill="#111"/><rect x="7" y="15" width="10" height="4" fill="#111"/></g>
<g transform="translate(1175,94)"><path d="M12 1C6 1 6 3 6 5V8H12V9H4C1 9 1 12 1 14C1 17 2 19 5 19H7V15C7 13 8 12 10 12H15C17 12 18 11 18 9V5C18 3 17 1 12 1Z" fill="#3a6fa8"/><path d="M12 23C17 23 18 21 18 19V16H12V15H19C22 15 22 12 22 10C22 7 21 5 18 5H16V9C16 11 15 12 13 12H9C7 12 6 13 6 15V19C6 21 7 23 12 23Z" fill="#f2d23c"/><path d="M17 18L21 20L17 22" stroke="#555" fill="none" stroke-width="1"/></g>
<g transform="translate(1207,94)"><text x="0" y="11" font-family="Liberation Sans" font-weight="bold" font-size="10" fill="#3a3a4a">KML</text><rect x="10" y="14" width="9" height="9" rx="2" fill="#5a9a5a" stroke="#3f7a3f" stroke-width="0.6"/><path d="M14.5 15.6V21.4M11.6 18.5H17.4" stroke="#fff" stroke-width="1.8"/></g>
<g transform="translate(1237,94)"><text x="-1" y="10" font-family="Liberation Sans" font-weight="bold" font-size="9.5" fill="#222">HTML</text><rect x="9" y="14" width="9" height="9" rx="1.5" fill="#e6c619" stroke="#b89c10" stroke-width="0.6"/><path d="M13.5 15.5V21.5M10.5 18.5H16.5M11.4 16.4L15.6 20.6M15.6 16.4L11.4 20.6" stroke="#fff" stroke-width="1"/></g>
<g transform="translate(1268,94)"><rect x="1" y="3" width="20" height="14" rx="6" fill="#3f5f90"/><rect x="5" y="6" width="5" height="4" fill="#9ab4d8"/><rect x="10" y="10" width="5" height="4" fill="#9ab4d8"/><rect x="14" y="5" width="5" height="4" fill="#1f2f50"/><rect x="14" y="14" width="9" height="9" rx="2" fill="#5a9a5a" stroke="#3f7a3f" stroke-width="0.6"/><path d="M18.5 15.6V21.4M15.6 18.5H21.4" stroke="#fff" stroke-width="1.8"/></g>
<g transform="translate(1299,94)"><rect x="2.0" y="2.0" width="4" height="4" fill="#a8d070" stroke="#888" stroke-width="0.3"/><rect x="7.3" y="2.0" width="4" height="4" fill="#e8a0a0" stroke="#888" stroke-width="0.3"/><rect x="12.6" y="2.0" width="4" height="4" fill="#f0b870" stroke="#888" stroke-width="0.3"/><rect x="17.9" y="2.0" width="4" height="4" fill="#a8d070" stroke="#888" stroke-width="0.3"/><rect x="2.0" y="7.3" width="4" height="4" fill="#c0a0e0" stroke="#888" stroke-width="0.3"/><rect x="7.3" y="7.3" width="4" height="4" fill="#a0d8c0" stroke="#888" stroke-width="0.3"/><rect x="12.6" y="7.3" width="4" height="4" fill="#90b8e8" stroke="#888" stroke-width="0.3"/><rect x="17.9" y="7.3" width="4" height="4" fill="#c0a0e0" stroke="#888" stroke-width="0.3"/><rect x="2.0" y="12.6" width="4" height="4" fill="#a8d070" stroke="#888" stroke-width="0.3"/><rect x="7.3" y="12.6" width="4" height="4" fill="#e8a0a0" stroke="#888" stroke-width="0.3"/><rect x="12.6" y="12.6" width="4" height="4" fill="#f0b870" stroke="#888" stroke-width="0.3"/><rect x="17.9" y="12.6" width="4" height="4" fill="#a8d070" stroke="#888" stroke-width="0.3"/><rect x="2.0" y="17.9" width="4" height="4" fill="#c0a0e0" stroke="#888" stroke-width="0.3"/><rect x="7.3" y="17.9" width="4" height="4" fill="#a0d8c0" stroke="#888" stroke-width="0.3"/><rect x="12.6" y="17.9" width="4" height="4" fill="#90b8e8" stroke="#888" stroke-width="0.3"/><rect x="17.9" y="17.9" width="4" height="4" fill="#c0a0e0" stroke="#888" stroke-width="0.3"/></g>
<g transform="translate(1330,94)"><path d="M2 2H20V20H2ZM8 2V20M14 2V20M2 8H20M2 14H20" fill="#fff" stroke="#6a98c8" stroke-width="1.2"/><rect x="14" y="14" width="9" height="9" rx="1.5" fill="#e6c619" stroke="#b89c10" stroke-width="0.6"/><path d="M18.5 15.5V21.5M15.5 18.5H21.5M16.4 16.4L20.6 20.6M20.6 16.4L16.4 20.6" stroke="#fff" stroke-width="1"/></g>
<g transform="translate(1374,94)"><rect x="4" y="1" width="17" height="22" fill="#5b84b9" stroke="#2e4a70" stroke-width="0.8"/><rect x="4" y="1" width="4" height="22" fill="#2e4a70"/><text x="10.5" y="16" font-family="Liberation Sans" font-size="12" fill="#fff">?</text></g>
<g transform="translate(1420,94)"><path d="M12 1V23M1 12H23" stroke="#333" stroke-width="1"/><circle cx="12" cy="12" r="3.5" fill="none" stroke="#b02020" stroke-width="1.3" stroke-dasharray="2.5,1.5"/></g>
<g transform="translate(15,128)"><path d="M2 2L2 22L22 22Z" fill="#f0a070" stroke="#704020" stroke-width="1.1"/><path d="M5 13L5 19L11 19Z" fill="#fff" stroke="#704020" stroke-width="0.9"/><rect x="15" y="3" width="6" height="18" fill="#f2d84c" stroke="#8a7a20" stroke-width="0.8"/></g>
<g transform="translate(47,128)"><circle cx="4" cy="13" r="2.3" fill="none" stroke="#c3c3c3" stroke-width="1.5"/><circle cx="11" cy="4" r="2.3" fill="none" stroke="#c3c3c3" stroke-width="1.5"/><circle cx="18" cy="8" r="2.3" fill="none" stroke="#c3c3c3" stroke-width="1.5"/><rect x="12" y="13" width="10" height="10" rx="1.5" fill="#c3c3c3"/></g>
<g transform="translate(92,128)"><path d="M2 5Q4 1 11 2Q19 3 20 8Q21 13 13 12Q7 12 6 15Q3 15 2 10Z" fill="#c3c3c3"/><rect x="13" y="13" width="10" height="10" rx="1.5" fill="#c3c3c3"/><circle cx="18" cy="18" r="2.5" fill="none" stroke="#eee" stroke-width="1.2"/></g>
<g transform="translate(123,128)"><circle cx="8" cy="8" r="6.5" fill="#c3c3c3"/><path d="M8 12L18 9L22 15L16 22L8 20Z" fill="#c3c3c3" stroke="#ddd" stroke-width="0.8"/></g>
<g transform="translate(154,128)"><path d="M1 6Q3 1 10 2Q18 2 19 7Q20 12 12 11Q6 11 1 9Z" fill="#c3c3c3"/><ellipse cx="7" cy="6" rx="4" ry="2.5" fill="#f0f0f0"/><rect x="13" y="13" width="10" height="10" rx="1.5" fill="#c3c3c3"/></g>
<g transform="translate(186,128)"><path d="M2 5Q4 1 11 2Q19 3 20 8Q21 13 13 12Q7 12 6 15Q3 15 2 10Z" fill="#c3c3c3"/><path d="M1 22Q2 14 9 15Q12 17 10 22Z" fill="#c3c3c3"/><rect x="13" y="13" width="10" height="10" rx="1.5" fill="#c3c3c3"/></g>
<g transform="translate(217,128)"><path d="M2 5Q4 1 11 2Q19 3 20 8Q21 13 13 12Q7 12 6 15Q3 15 2 10Z" fill="#c3c3c3"/><rect x="13" y="13" width="10" height="10" rx="1.5" fill="#c3c3c3"/><circle cx="18" cy="18" r="2.5" fill="none" stroke="#eee" stroke-width="1.2"/></g>
<g transform="translate(248,128)"><path d="M1 6Q3 1 10 2Q18 2 19 7Q20 12 12 11Q6 11 1 9Z" fill="#c3c3c3"/><ellipse cx="7" cy="6" rx="4" ry="2.5" fill="#f0f0f0"/><rect x="13" y="13" width="10" height="10" rx="1.5" fill="#c3c3c3"/></g>
<g transform="translate(279,128)"><path d="M2 5Q4 1 11 2Q19 3 20 8Q21 13 13 12Q7 12 6 15Q3 15 2 10Z" fill="#c3c3c3"/><path d="M1 22Q2 14 9 15Q12 17 10 22Z" fill="#c3c3c3"/><rect x="13" y="13" width="10" height="10" rx="1.5" fill="#c3c3c3"/></g>
<g transform="translate(310,128)"><path d="M4 4Q10 0 18 3Q22 8 16 10Q12 12 12 18Q10 23 6 18Q2 12 4 4Z" fill="#c3c3c3"/></g>
<g transform="translate(340,128)"><path d="M3 14Q6 4 16 3Q22 4 20 10Q16 20 8 21Q2 20 3 14Z" fill="#c3c3c3"/><path d="M6 16L16 7" stroke="#ddd" stroke-width="1"/></g>
<g transform="translate(372,128)"><path d="M2 2L9 14L16 2" fill="none" stroke="#c3c3c3" stroke-width="1.5"/><rect x="13" y="13" width="10" height="10" rx="2" fill="none" stroke="#c3c3c3" stroke-width="1.5"/></g>
<g transform="translate(402,128)"><path d="M12 1V23M4 8H20" stroke="#c3c3c3" stroke-width="1.3"/><rect x="2" y="15" width="6" height="6" fill="none" stroke="#c3c3c3"/><rect x="15" y="2" width="6" height="6" fill="none" stroke="#c3c3c3"/></g>
<g transform="translate(433,128)"><path d="M6 1L14 13M18 1L10 13" stroke="#c3c3c3" stroke-width="1.6"/><circle cx="7" cy="18" r="4" fill="none" stroke="#c3c3c3" stroke-width="2"/><circle cx="17" cy="18" r="4" fill="none" stroke="#c3c3c3" stroke-width="2"/><path d="M2 4Q8 8 4 12Z M22 4Q16 8 20 12Z" fill="#c3c3c3"/></g>
<g transform="translate(464,128)"><path d="M6 1L14 13M18 1L10 13" stroke="#c3c3c3" stroke-width="1.6"/><circle cx="7" cy="18" r="4" fill="none" stroke="#c3c3c3" stroke-width="2"/><circle cx="17" cy="18" r="4" fill="none" stroke="#c3c3c3" stroke-width="2"/><path d="M2 4Q8 8 4 12Z M22 4Q16 8 20 12Z" fill="#c3c3c3"/></g>
<g transform="translate(496,128)"><path d="M12 22Q2 12 3 7Q5 1 12 6Q19 1 21 7Q22 12 12 22Z" fill="#c3c3c3"/><path d="M7 8H17M7 11H17" stroke="#e8e8e8"/></g>
<g transform="translate(526,128)"><path d="M12 1V23M3 5H21M5 10H19M3 15H21M5 20H19" stroke="#c3c3c3" stroke-width="1.2"/></g>
<g transform="translate(556,128)"><path d="M4 20Q2 8 13 5" fill="none" stroke="#c3c3c3" stroke-width="1.6"/><path d="M12 2L21 7L12 11Z" fill="#c3c3c3"/><path d="M6 20L18 20" stroke="#c3c3c3"/></g>
<g transform="translate(14,162)"><path d="M1 4Q8 1 12 3Q18 1 22 4V21Q16 23 11 21Q6 23 1 21Z" fill="#b8dca0"/><path d="M4 10Q10 6 18 12" stroke="#8ac0a0" stroke-width="2" fill="none"/><path d="M10 20L20 14" stroke="#3a8a2a" stroke-width="2"/><path d="M16 19L22 16" stroke="#5aa03a" stroke-width="2"/></g>
<g transform="translate(46,162)"><rect x="1" y="4" width="20" height="18" fill="#e8dcc0"/><path d="M1 12L10 22H1Z" fill="#5a90d0"/><rect x="2" y="3" width="6" height="6" fill="#3aaa3a"/><path d="M8 18L21 2" stroke="#6a3a10" stroke-width="3.4"/><path d="M12 14L20 20" stroke="#5a90d0" stroke-width="2.5"/></g>
<g transform="translate(92,162)"><path d="M12 1V8M9 4L12 1L15 4" stroke="#000" stroke-width="1.8" fill="none"/><rect x="5" y="10" width="14" height="13" fill="#000"/><circle cx="12" cy="16.5" r="3.5" fill="none" stroke="#fff" stroke-width="1.4"/><circle cx="12" cy="16.5" r="1.3" fill="#fff"/></g>
<g transform="translate(122,162)"><rect x="1.5" y="2.5" width="18" height="14" fill="#555" stroke="#000" stroke-width="2" stroke-dasharray="3,1.5"/><path d="M4 14L9 8L13 12L16 9L18 14Z" fill="#888"/><path d="M13 11L13 24L16 21L18.5 25L20.5 24L18 20L22 20Z" fill="#fff" stroke="#000" stroke-width="1"/></g>
<path d="M724 69H734L729 75Z" fill="#888"/>
<path d="M771 69H781L776 75Z" fill="#000"/>
<path d="M817 69H827L822 75Z" fill="#000"/>
<path d="M1017 69H1027L1022 75Z" fill="#000"/>
<path d="M1094 69H1104L1099 75Z" fill="#000"/>
<path d="M377 103H387L382 109Z" fill="#888"/>
<path d="M76 137H86L81 143Z" fill="#666"/>
<path d="M587 137H597L592 143Z" fill="#666"/>
<rect x="199" y="58" width="1" height="29" fill="#cfcfcf"/>
<rect x="647" y="58" width="1" height="29" fill="#cfcfcf"/>
<rect x="170" y="92" width="1" height="28" fill="#cfcfcf"/>
<rect x="206" y="92" width="1" height="28" fill="#cfcfcf"/>
<rect x="607" y="92" width="1" height="28" fill="#cfcfcf"/>
<rect x="685" y="92" width="1" height="28" fill="#cfcfcf"/>
<rect x="754" y="92" width="1" height="28" fill="#cfcfcf"/>
<rect x="914" y="92" width="1" height="28" fill="#cfcfcf"/>
<rect x="1052" y="92" width="1" height="28" fill="#cfcfcf"/>
<rect x="1159" y="92" width="1" height="28" fill="#cfcfcf"/>
<rect x="1359" y="92" width="1" height="28" fill="#cfcfcf"/>
<rect x="1405" y="92" width="1" height="28" fill="#cfcfcf"/>
<rect x="75" y="160" width="1" height="28" fill="#cfcfcf"/>
<rect x="4" y="60" width="2" height="2" fill="#a5acc0"/><rect x="4" y="64" width="2" height="2" fill="#a5acc0"/><rect x="4" y="68" width="2" height="2" fill="#a5acc0"/><rect x="4" y="72" width="2" height="2" fill="#a5acc0"/><rect x="4" y="76" width="2" height="2" fill="#a5acc0"/><rect x="4" y="80" width="2" height="2" fill="#a5acc0"/><rect x="4" y="84" width="2" height="2" fill="#a5acc0"/>
<rect x="4" y="94" width="2" height="2" fill="#a5acc0"/><rect x="4" y="98" width="2" height="2" fill="#a5acc0"/><rect x="4" y="102" width="2" height="2" fill="#a5acc0"/><rect x="4" y="106" width="2" height="2" fill="#a5acc0"/><rect x="4" y="110" width="2" height="2" fill="#a5acc0"/><rect x="4" y="114" width="2" height="2" fill="#a5acc0"/><rect x="4" y="118" width="2" height="2" fill="#a5acc0"/>
<rect x="4" y="128" width="2" height="2" fill="#a5acc0"/><rect x="4" y="132" width="2" height="2" fill="#a5acc0"/><rect x="4" y="136" width="2" height="2" fill="#a5acc0"/><rect x="4" y="140" width="2" height="2" fill="#a5acc0"/><rect x="4" y="144" width="2" height="2" fill="#a5acc0"/><rect x="4" y="148" width="2" height="2" fill="#a5acc0"/><rect x="4" y="152" width="2" height="2" fill="#a5acc0"/>
<rect x="4" y="162" width="2" height="2" fill="#a5acc0"/><rect x="4" y="166" width="2" height="2" fill="#a5acc0"/><rect x="4" y="170" width="2" height="2" fill="#a5acc0"/><rect x="4" y="174" width="2" height="2" fill="#a5acc0"/><rect x="4" y="178" width="2" height="2" fill="#a5acc0"/><rect x="4" y="182" width="2" height="2" fill="#a5acc0"/><rect x="4" y="186" width="2" height="2" fill="#a5acc0"/>
<rect x="205" y="60" width="2" height="2" fill="#a5acc0"/><rect x="205" y="64" width="2" height="2" fill="#a5acc0"/><rect x="205" y="68" width="2" height="2" fill="#a5acc0"/><rect x="205" y="72" width="2" height="2" fill="#a5acc0"/><rect x="205" y="76" width="2" height="2" fill="#a5acc0"/><rect x="205" y="80" width="2" height="2" fill="#a5acc0"/><rect x="205" y="84" width="2" height="2" fill="#a5acc0"/>
<rect x="653" y="60" width="2" height="2" fill="#a5acc0"/><rect x="653" y="64" width="2" height="2" fill="#a5acc0"/><rect x="653" y="68" width="2" height="2" fill="#a5acc0"/><rect x="653" y="72" width="2" height="2" fill="#a5acc0"/><rect x="653" y="76" width="2" height="2" fill="#a5acc0"/><rect x="653" y="80" width="2" height="2" fill="#a5acc0"/><rect x="653" y="84" width="2" height="2" fill="#a5acc0"/>
<rect x="212" y="94" width="2" height="2" fill="#a5acc0"/><rect x="212" y="98" width="2" height="2" fill="#a5acc0"/><rect x="212" y="102" width="2" height="2" fill="#a5acc0"/><rect x="212" y="106" width="2" height="2" fill="#a5acc0"/><rect x="212" y="110" width="2" height="2" fill="#a5acc0"/><rect x="212" y="114" width="2" height="2" fill="#a5acc0"/><rect x="212" y="118" width="2" height="2" fill="#a5acc0"/>
<rect x="613" y="94" width="2" height="2" fill="#a5acc0"/><rect x="613" y="98" width="2" height="2" fill="#a5acc0"/><rect x="613" y="102" width="2" height="2" fill="#a5acc0"/><rect x="613" y="106" width="2" height="2" fill="#a5acc0"/><rect x="613" y="110" width="2" height="2" fill="#a5acc0"/><rect x="613" y="114" width="2" height="2" fill="#a5acc0"/><rect x="613" y="118" width="2" height="2" fill="#a5acc0"/>
<rect x="920" y="94" width="2" height="2" fill="#a5acc0"/><rect x="920" y="98" width="2" height="2" fill="#a5acc0"/><rect x="920" y="102" width="2" height="2" fill="#a5acc0"/><rect x="920" y="106" width="2" height="2" fill="#a5acc0"/><rect x="920" y="110" width="2" height="2" fill="#a5acc0"/><rect x="920" y="114" width="2" height="2" fill="#a5acc0"/><rect x="920" y="118" width="2" height="2" fill="#a5acc0"/>
<rect x="1058" y="94" width="2" height="2" fill="#a5acc0"/><rect x="1058" y="98" width="2" height="2" fill="#a5acc0"/><rect x="1058" y="102" width="2" height="2" fill="#a5acc0"/><rect x="1058" y="106" width="2" height="2" fill="#a5acc0"/><rect x="1058" y="110" width="2" height="2" fill="#a5acc0"/><rect x="1058" y="114" width="2" height="2" fill="#a5acc0"/><rect x="1058" y="118" width="2" height="2" fill="#a5acc0"/>
<rect x="1165" y="94" width="2" height="2" fill="#a5acc0"/><rect x="1165" y="98" width="2" height="2" fill="#a5acc0"/><rect x="1165" y="102" width="2" height="2" fill="#a5acc0"/><rect x="1165" y="106" width="2" height="2" fill="#a5acc0"/><rect x="1165" y="110" width="2" height="2" fill="#a5acc0"/><rect x="1165" y="114" width="2" height="2" fill="#a5acc0"/><rect x="1165" y="118" width="2" height="2" fill="#a5acc0"/>
<rect x="1365" y="94" width="2" height="2" fill="#a5acc0"/><rect x="1365" y="98" width="2" height="2" fill="#a5acc0"/><rect x="1365" y="102" width="2" height="2" fill="#a5acc0"/><rect x="1365" y="106" width="2" height="2" fill="#a5acc0"/><rect x="1365" y="110" width="2" height="2" fill="#a5acc0"/><rect x="1365" y="114" width="2" height="2" fill="#a5acc0"/><rect x="1365" y="118" width="2" height="2" fill="#a5acc0"/>
<rect x="1410" y="94" width="2" height="2" fill="#a5acc0"/><rect x="1410" y="98" width="2" height="2" fill="#a5acc0"/><rect x="1410" y="102" width="2" height="2" fill="#a5acc0"/><rect x="1410" y="106" width="2" height="2" fill="#a5acc0"/><rect x="1410" y="110" width="2" height="2" fill="#a5acc0"/><rect x="1410" y="114" width="2" height="2" fill="#a5acc0"/><rect x="1410" y="118" width="2" height="2" fill="#a5acc0"/>
<rect x="81" y="162" width="2" height="2" fill="#a5acc0"/><rect x="81" y="166" width="2" height="2" fill="#a5acc0"/><rect x="81" y="170" width="2" height="2" fill="#a5acc0"/><rect x="81" y="174" width="2" height="2" fill="#a5acc0"/><rect x="81" y="178" width="2" height="2" fill="#a5acc0"/><rect x="81" y="182" width="2" height="2" fill="#a5acc0"/><rect x="81" y="186" width="2" height="2" fill="#a5acc0"/>
<rect x="4" y="195" width="2" height="2" fill="#a5acc0"/><rect x="8" y="195" width="2" height="2" fill="#a5acc0"/><rect x="12" y="195" width="2" height="2" fill="#a5acc0"/><rect x="16" y="195" width="2" height="2" fill="#a5acc0"/><rect x="20" y="195" width="2" height="2" fill="#a5acc0"/><rect x="24" y="195" width="2" height="2" fill="#a5acc0"/><rect x="28" y="195" width="2" height="2" fill="#a5acc0"/><rect x="32" y="195" width="2" height="2" fill="#a5acc0"/><rect x="36" y="195" width="2" height="2" fill="#a5acc0"/><rect x="40" y="195" width="2" height="2" fill="#a5acc0"/><rect x="44" y="195" width="2" height="2" fill="#a5acc0"/>
<g transform="translate(4,206)"><path d="M2 3L8 20L13 5L20 4" fill="none" stroke="#333" stroke-width="1.3"/><circle cx="8" cy="20" r="1.8" fill="#fff" stroke="#333" stroke-width="0.9"/><circle cx="2" cy="3" r="1.5" fill="#fff" stroke="#333" stroke-width="0.8"/><circle cx="13" cy="5" r="1.5" fill="#fff" stroke="#333" stroke-width="0.8"/><circle cx="20" cy="4" r="1.5" fill="#fff" stroke="#333" stroke-width="0.8"/><rect x="14" y="14" width="9" height="9" rx="2" fill="#5a9a5a" stroke="#3f7a3f" stroke-width="0.6"/><path d="M18.5 15.6V21.4M15.6 18.5H21.4" stroke="#fff" stroke-width="1.8"/></g>
<g transform="translate(4,236)"><rect x="1.0" y="1.0" width="6.3" height="6.3" fill="#23406e"/><rect x="7.3" y="1.0" width="6.3" height="6.3" fill="#6f98cc"/><rect x="13.6" y="1.0" width="6.3" height="6.3" fill="#23406e"/><rect x="1.0" y="7.3" width="6.3" height="6.3" fill="#6f98cc"/><rect x="7.3" y="7.3" width="6.3" height="6.3" fill="#23406e"/><rect x="13.6" y="7.3" width="6.3" height="6.3" fill="#6f98cc"/><rect x="1.0" y="13.6" width="6.3" height="6.3" fill="#23406e"/><rect x="7.3" y="13.6" width="6.3" height="6.3" fill="#6f98cc"/><rect x="13.6" y="13.6" width="6.3" height="6.3" fill="#23406e"/><rect x="14" y="14" width="9" height="9" rx="2" fill="#5a9a5a" stroke="#3f7a3f" stroke-width="0.6"/><path d="M18.5 15.6V21.4M15.6 18.5H21.4" stroke="#fff" stroke-width="1.8"/></g>
<g transform="translate(4,266)"><rect x="1" y="1" width="20" height="20" fill="#8fb4dc" stroke="#2e4a70" stroke-width="1.2"/><path d="M11 1V21M1 11H21M1 1L11 11M21 1L11 11" stroke="#2e4a70" stroke-width="1.2"/><rect x="14" y="14" width="9" height="9" rx="2" fill="#5a9a5a" stroke="#3f7a3f" stroke-width="0.6"/><path d="M18.5 15.6V21.4M15.6 18.5H21.4" stroke="#fff" stroke-width="1.8"/></g>
<g transform="translate(4,297)"><path d="M8 3Q13 2 13 7Q13 14 5 18Q10 12 8 10Q4 10 4 6Q4 3 8 3Z" fill="#2a4a80"/><rect x="14" y="14" width="9" height="9" rx="2" fill="#5a9a5a" stroke="#3f7a3f" stroke-width="0.6"/><path d="M18.5 15.6V21.4M15.6 18.5H21.4" stroke="#fff" stroke-width="1.8"/></g>
<g transform="translate(4,327)"><path d="M1 22C3 14 9 5 21 1C19 8 13 16 4 19Z" fill="#6a8cc0" stroke="#2f4f80" stroke-width="0.8"/><rect x="14" y="14" width="9" height="9" rx="2" fill="#5a9a5a" stroke="#3f7a3f" stroke-width="0.6"/><path d="M18.5 15.6V21.4M15.6 18.5H21.4" stroke="#fff" stroke-width="1.8"/></g>
<g transform="translate(4,357)"><rect x="1" y="1" width="21" height="21" rx="3" fill="#9fb6d4" stroke="#4a6a90" stroke-width="1"/><path d="M4 4L10 17L17 4" fill="none" stroke="#333" stroke-width="1.2"/><rect x="14" y="14" width="9" height="9" rx="2" fill="#5a9a5a" stroke="#3f7a3f" stroke-width="0.6"/><path d="M18.5 15.6V21.4M15.6 18.5H21.4" stroke="#fff" stroke-width="1.8"/></g>
<g transform="translate(4,386)"><path d="M3 4Q10 0 18 4Q22 10 18 14Q16 20 12 18Q10 14 8 16Q5 20 3 14Q0 10 3 4Z" fill="#3a6a9a" stroke="#1a3a60" stroke-width="0.8"/><rect x="14" y="14" width="9" height="9" rx="2" fill="#5a9a5a" stroke="#3f7a3f" stroke-width="0.6"/><path d="M18.5 15.6V21.4M15.6 18.5H21.4" stroke="#fff" stroke-width="1.8"/></g>
<g transform="translate(4,416)"><circle cx="10" cy="10" r="9.5" fill="#7aa2d6" stroke="#444" stroke-width="0.8"/><ellipse cx="10" cy="10" rx="4.275" ry="9.5" fill="none" stroke="#556" stroke-width="0.8"/><path d="M0.5 10H19.5M1.9250000000000007 5.725H18.075M1.9250000000000007 14.275H18.075" stroke="#556" stroke-width="0.8"/><rect x="14" y="14" width="9" height="9" rx="2" fill="#5a9a5a" stroke="#3f7a3f" stroke-width="0.6"/><path d="M18.5 15.6V21.4M15.6 18.5H21.4" stroke="#fff" stroke-width="1.8"/></g>
<g transform="translate(4,446)"><circle cx="11" cy="10" r="9.5" fill="#3a6aa8" stroke="#444" stroke-width="0.8"/><ellipse cx="11" cy="10" rx="4.275" ry="9.5" fill="none" stroke="#556" stroke-width="0.8"/><path d="M1.5 10H20.5M2.9250000000000007 5.725H19.075M2.9250000000000007 14.275H19.075" stroke="#556" stroke-width="0.8"/><path d="M2 10H20M11 1V19" stroke="#dde" stroke-width="1.5"/><rect x="14" y="14" width="9" height="9" rx="2" fill="#5a9a5a" stroke="#3f7a3f" stroke-width="0.6"/><path d="M18.5 15.6V21.4M15.6 18.5H21.4" stroke="#fff" stroke-width="1.8"/></g>
<g transform="translate(4,476)"><circle cx="10" cy="10" r="9.5" fill="#9ab8e0" stroke="#444" stroke-width="0.8"/><ellipse cx="10" cy="10" rx="4.275" ry="9.5" fill="none" stroke="#556" stroke-width="0.8"/><path d="M0.5 10H19.5M1.9250000000000007 5.725H18.075M1.9250000000000007 14.275H18.075" stroke="#556" stroke-width="0.8"/><path d="M4 5L9 15L15 5" stroke="#333" stroke-width="1.2" fill="none"/><rect x="14" y="14" width="9" height="9" rx="2" fill="#5a9a5a" stroke="#3f7a3f" stroke-width="0.6"/><path d="M18.5 15.6V21.4M15.6 18.5H21.4" stroke="#fff" stroke-width="1.8"/></g>
<g transform="translate(4,506)"><path d="M2 3L8 18L13 5L20 4" fill="none" stroke="#333" stroke-width="1.3"/><circle cx="8" cy="18" r="1.8" fill="#fff" stroke="#333" stroke-width="0.9"/><rect x="11" y="14" width="9" height="9" rx="1.5" fill="#e6c619" stroke="#b89c10" stroke-width="0.6"/><path d="M15.5 15.5V21.5M12.5 18.5H18.5M13.4 16.4L17.6 20.6M17.6 16.4L13.4 20.6" stroke="#fff" stroke-width="1"/></g>
<g transform="translate(4,537)"><rect x="1" y="1" width="19" height="19" fill="#fff" stroke="#3f6fa8" stroke-width="1.2"/><rect x="1" y="1" width="19" height="4" fill="#3f6fa8"/><path d="M6 1V20M11 1V20M16 1V20M1 10H20M1 15H20" stroke="#3f6fa8" stroke-width="1.2"/><rect x="14" y="14" width="9" height="9" rx="2" fill="#5a9a5a" stroke="#3f7a3f" stroke-width="0.6"/><path d="M18.5 15.6V21.4M15.6 18.5H21.4" stroke="#fff" stroke-width="1.8"/></g>
<path d="M35 395H45L40 401Z" fill="#000"/>
<path d="M35 425H45L40 431Z" fill="#000"/>
<path d="M35 485H45L40 491Z" fill="#000"/>
<path d="M35 515H45L40 521Z" fill="#000"/>
<g transform="translate(55,229)"><path d="M1 13L9 9L13 15L6 19Z" fill="#f0a050"/><path d="M3 15L8 12L10 16Z" fill="#d05030"/><path d="M9 10L17 2" stroke="#e0b030" stroke-width="3"/></g>
<g transform="translate(79,229)"><path d="M4 8H10V16H4Z M7 5H13V13H7Z" fill="#f0f0f0" stroke="#999" stroke-width="0.9"/><path d="M9 2V12M12 4V12" stroke="#666" stroke-width="0.9"/><circle cx="14" cy="15" r="3" fill="#7ac07a"/></g>
<g transform="translate(101,229)"><path d="M1 10Q9 2 17 10Q9 17 1 10Z" fill="#cfd8e6" stroke="#556" stroke-width="0.8"/><circle cx="8" cy="9" r="3" fill="#3a5a8a"/><path d="M11 13H18L14.5 17Z" fill="#111"/></g>
<g transform="translate(125,229)"><path d="M1 3H15L10 10V17H6V10Z" fill="#6a8ab0"/><rect x="1" y="2" width="14" height="2.5" fill="#e0e070"/></g>
<g transform="translate(148,229)"><text x="0" y="13" font-family="Liberation Serif" font-size="19" fill="#8a4a9a">ε</text><rect x="8" y="10" width="6" height="6" fill="#bbb"/><path d="M21 8H29L25 12Z" fill="#111"/></g>
<g transform="translate(186,229)"><rect x="1" y="2" width="8" height="12" fill="#f0e0a0" stroke="#999" stroke-width="0.6"/><path d="M11 1V12M7.5 9L11 14L14.5 9" stroke="#3a6ab0" stroke-width="2.2" fill="none"/></g>
<g transform="translate(209,229)"><rect x="1" y="2" width="8" height="12" fill="#f0e0a0" stroke="#999" stroke-width="0.6"/><path d="M11 15V4M7.5 7L11 2L14.5 7" stroke="#3a6ab0" stroke-width="2.2" fill="none"/></g>
<g transform="translate(232,229)"><rect x="1" y="1" width="11" height="11" fill="none" stroke="#888" stroke-width="0.9"/><rect x="9" y="10" width="6" height="4" rx="2" fill="#e05050"/></g>
</svg>
<div class="a" style="left:0px;top:0px;width:1920px;height:1px;background:#b0141c"></div>
<div class="a" style="left:0px;top:0px;width:1px;height:1034px;background:#b0141c"></div>
<div class="a" style="left:1919px;top:0px;width:1px;height:1034px;background:#b0141c"></div>
<div class="a" style="left:0px;top:1031px;width:1920px;height:3px;background:#b0141c"></div>
</body></html>
